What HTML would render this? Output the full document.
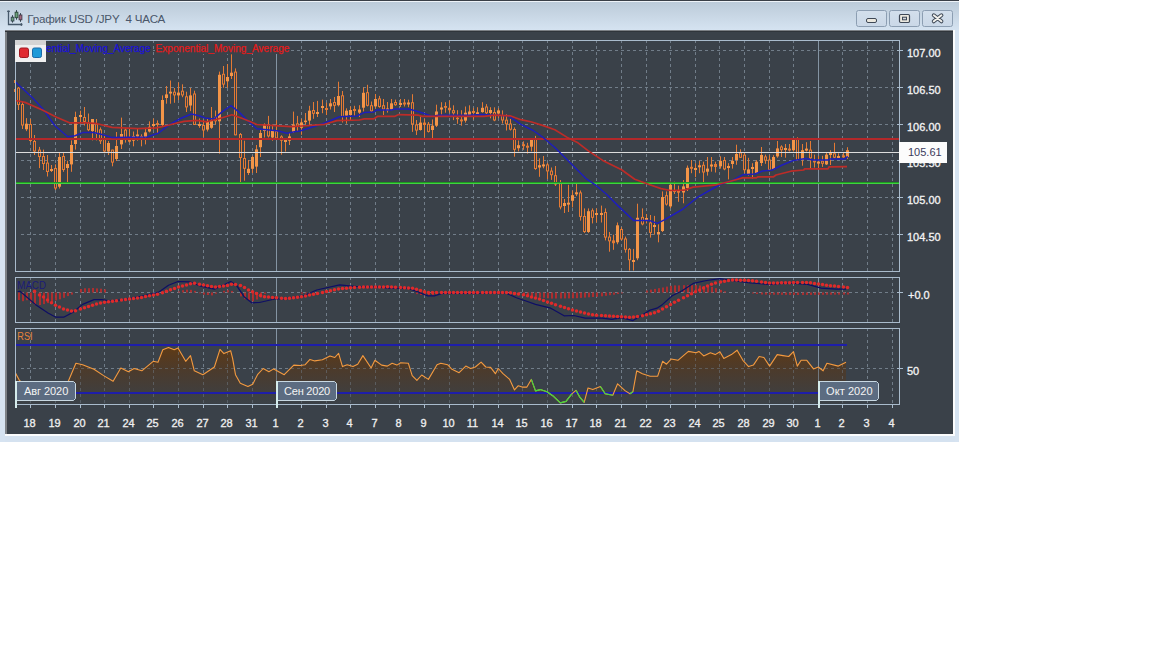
<!DOCTYPE html><html><head><meta charset="utf-8"><title>chart</title><style>html,body{margin:0;padding:0;width:1152px;height:648px;background:#fff;overflow:hidden}svg{position:absolute;left:0;top:0;display:block}text{font-family:"Liberation Sans",sans-serif}</style></head><body>
<svg width="1152" height="648" viewBox="0 0 1152 648">
<defs><linearGradient id="tb" x1="0" y1="0" x2="0" y2="1"><stop offset="0" stop-color="#bccbd9"/><stop offset="1" stop-color="#d5e3f1"/></linearGradient><linearGradient id="btn" x1="0" y1="0" x2="0" y2="1"><stop offset="0" stop-color="#d3dfec"/><stop offset="1" stop-color="#cad8e7"/></linearGradient><linearGradient id="rsif" gradientUnits="userSpaceOnUse" x1="0" y1="345" x2="0" y2="404"><stop offset="0" stop-color="#623c14"/><stop offset="0.2" stop-color="#563a1f"/><stop offset="0.45" stop-color="#4b3b2d"/><stop offset="0.75" stop-color="#423e3b"/><stop offset="0.85" stop-color="#3d4043"/><stop offset="1" stop-color="#3b4147"/></linearGradient><clipPath id="cpm"><rect x="14" y="41" width="885" height="230"/></clipPath><clipPath id="cpd"><rect x="16" y="278" width="883" height="44"/></clipPath><clipPath id="cpr"><rect x="16" y="329" width="883" height="75"/></clipPath></defs>
<rect x="0" y="0" width="959" height="442" fill="#d5e2f0"/>
<rect x="0" y="0" width="959" height="1" fill="#3a3f47"/>
<rect x="0" y="1" width="959" height="1" fill="#eef3f8"/>
<rect x="0" y="2" width="959" height="28" fill="url(#tb)"/>
<rect x="0" y="30" width="5" height="412" fill="#d6e3f1"/>
<rect x="955" y="30" width="4" height="412" fill="#d6e3f1"/>
<rect x="5" y="30" width="950" height="406" fill="#fbfcfd"/>
<rect x="5" y="30" width="948" height="404" fill="#7d8186"/>
<rect x="7" y="32" width="946" height="402" fill="#3a4149"/>
<rect x="5" y="31" width="948" height="1" fill="#30353b"/>
<g shape-rendering="geometricPrecision"><path d="M8.5 10.5 V24.5 H22.5" fill="none" stroke="#46586a" stroke-width="1.3"/><path d="M7 11.3 H10" stroke="#46586a" stroke-width="1.1"/><path d="M21.3 23 V26" stroke="#46586a" stroke-width="1.1"/><rect x="12" y="15.2" width="1" height="7.4" fill="#34444f"/><rect x="11.2" y="17.2" width="2.7" height="3.8" fill="#6aa27a" stroke="#34444f" stroke-width="0.9"/><rect x="16" y="10.1" width="1" height="9.6" fill="#34444f"/><rect x="15.1" y="12.2" width="2.8" height="5.5" fill="#6aa27a" stroke="#2f4a3a" stroke-width="0.9"/><rect x="20" y="13.1" width="1" height="8.7" fill="#34444f"/><rect x="19.1" y="15" width="2.8" height="4.8" fill="#a2667a" stroke="#443a4a" stroke-width="0.9"/></g>
<text x="27.3" y="22.6" font-size="11.6" fill="#4a576a" textLength="138" lengthAdjust="spacing">График USD /JPY  4 ЧАСА</text>
<rect x="856.5" y="10.5" width="30" height="16" rx="2" fill="url(#btn)" stroke="#8c9eb2"/>
<rect x="866.5" y="18.5" width="10" height="4" rx="1.5" fill="#ebe8df" stroke="#3e4856" stroke-width="1"/>
<rect x="889.5" y="10.5" width="30" height="16" rx="2" fill="url(#btn)" stroke="#8c9eb2"/>
<rect x="899.5" y="14.5" width="10" height="8" rx="1.2" fill="#ebe8df" stroke="#3e4856" stroke-width="1.2"/><rect x="902.5" y="17.2" width="4" height="2.6" fill="#d0d4da" stroke="#3e4856" stroke-width="1"/>
<rect x="922.5" y="10.5" width="30" height="16" rx="2" fill="url(#btn)" stroke="#8c9eb2"/>
<path d="M933.8 15.3 L941.4 21.3 M941.4 15.3 L933.8 21.3" stroke="#3e4856" stroke-width="4" stroke-linecap="round"/><path d="M933.8 15.3 L941.4 21.3 M941.4 15.3 L933.8 21.3" stroke="#f2f2ee" stroke-width="2" stroke-linecap="round"/>
<g shape-rendering="crispEdges"><line x1="30.5" y1="40" x2="30.5" y2="271" stroke="#717d89" stroke-width="1" stroke-dasharray="3 3"/><line x1="30.5" y1="277" x2="30.5" y2="322" stroke="#717d89" stroke-width="1" stroke-dasharray="3 3"/><line x1="30.5" y1="328" x2="30.5" y2="404" stroke="#717d89" stroke-width="1" stroke-dasharray="3 3"/><line x1="55.5" y1="40" x2="55.5" y2="271" stroke="#717d89" stroke-width="1" stroke-dasharray="3 3"/><line x1="55.5" y1="277" x2="55.5" y2="322" stroke="#717d89" stroke-width="1" stroke-dasharray="3 3"/><line x1="55.5" y1="328" x2="55.5" y2="404" stroke="#717d89" stroke-width="1" stroke-dasharray="3 3"/><line x1="80.5" y1="40" x2="80.5" y2="271" stroke="#717d89" stroke-width="1" stroke-dasharray="3 3"/><line x1="80.5" y1="277" x2="80.5" y2="322" stroke="#717d89" stroke-width="1" stroke-dasharray="3 3"/><line x1="80.5" y1="328" x2="80.5" y2="404" stroke="#717d89" stroke-width="1" stroke-dasharray="3 3"/><line x1="104.5" y1="40" x2="104.5" y2="271" stroke="#717d89" stroke-width="1" stroke-dasharray="3 3"/><line x1="104.5" y1="277" x2="104.5" y2="322" stroke="#717d89" stroke-width="1" stroke-dasharray="3 3"/><line x1="104.5" y1="328" x2="104.5" y2="404" stroke="#717d89" stroke-width="1" stroke-dasharray="3 3"/><line x1="129.5" y1="40" x2="129.5" y2="271" stroke="#717d89" stroke-width="1" stroke-dasharray="3 3"/><line x1="129.5" y1="277" x2="129.5" y2="322" stroke="#717d89" stroke-width="1" stroke-dasharray="3 3"/><line x1="129.5" y1="328" x2="129.5" y2="404" stroke="#717d89" stroke-width="1" stroke-dasharray="3 3"/><line x1="153.5" y1="40" x2="153.5" y2="271" stroke="#717d89" stroke-width="1" stroke-dasharray="3 3"/><line x1="153.5" y1="277" x2="153.5" y2="322" stroke="#717d89" stroke-width="1" stroke-dasharray="3 3"/><line x1="153.5" y1="328" x2="153.5" y2="404" stroke="#717d89" stroke-width="1" stroke-dasharray="3 3"/><line x1="178.5" y1="40" x2="178.5" y2="271" stroke="#717d89" stroke-width="1" stroke-dasharray="3 3"/><line x1="178.5" y1="277" x2="178.5" y2="322" stroke="#717d89" stroke-width="1" stroke-dasharray="3 3"/><line x1="178.5" y1="328" x2="178.5" y2="404" stroke="#717d89" stroke-width="1" stroke-dasharray="3 3"/><line x1="203.5" y1="40" x2="203.5" y2="271" stroke="#717d89" stroke-width="1" stroke-dasharray="3 3"/><line x1="203.5" y1="277" x2="203.5" y2="322" stroke="#717d89" stroke-width="1" stroke-dasharray="3 3"/><line x1="203.5" y1="328" x2="203.5" y2="404" stroke="#717d89" stroke-width="1" stroke-dasharray="3 3"/><line x1="227.5" y1="40" x2="227.5" y2="271" stroke="#717d89" stroke-width="1" stroke-dasharray="3 3"/><line x1="227.5" y1="277" x2="227.5" y2="322" stroke="#717d89" stroke-width="1" stroke-dasharray="3 3"/><line x1="227.5" y1="328" x2="227.5" y2="404" stroke="#717d89" stroke-width="1" stroke-dasharray="3 3"/><line x1="252.5" y1="40" x2="252.5" y2="271" stroke="#717d89" stroke-width="1" stroke-dasharray="3 3"/><line x1="252.5" y1="277" x2="252.5" y2="322" stroke="#717d89" stroke-width="1" stroke-dasharray="3 3"/><line x1="252.5" y1="328" x2="252.5" y2="404" stroke="#717d89" stroke-width="1" stroke-dasharray="3 3"/><line x1="276.5" y1="40" x2="276.5" y2="271" stroke="#8494a3" stroke-width="1"/><line x1="276.5" y1="277" x2="276.5" y2="322" stroke="#8494a3" stroke-width="1"/><line x1="276.5" y1="328" x2="276.5" y2="404" stroke="#8494a3" stroke-width="1"/><line x1="301.5" y1="40" x2="301.5" y2="271" stroke="#717d89" stroke-width="1" stroke-dasharray="3 3"/><line x1="301.5" y1="277" x2="301.5" y2="322" stroke="#717d89" stroke-width="1" stroke-dasharray="3 3"/><line x1="301.5" y1="328" x2="301.5" y2="404" stroke="#717d89" stroke-width="1" stroke-dasharray="3 3"/><line x1="326.5" y1="40" x2="326.5" y2="271" stroke="#717d89" stroke-width="1" stroke-dasharray="3 3"/><line x1="326.5" y1="277" x2="326.5" y2="322" stroke="#717d89" stroke-width="1" stroke-dasharray="3 3"/><line x1="326.5" y1="328" x2="326.5" y2="404" stroke="#717d89" stroke-width="1" stroke-dasharray="3 3"/><line x1="350.5" y1="40" x2="350.5" y2="271" stroke="#717d89" stroke-width="1" stroke-dasharray="3 3"/><line x1="350.5" y1="277" x2="350.5" y2="322" stroke="#717d89" stroke-width="1" stroke-dasharray="3 3"/><line x1="350.5" y1="328" x2="350.5" y2="404" stroke="#717d89" stroke-width="1" stroke-dasharray="3 3"/><line x1="375.5" y1="40" x2="375.5" y2="271" stroke="#717d89" stroke-width="1" stroke-dasharray="3 3"/><line x1="375.5" y1="277" x2="375.5" y2="322" stroke="#717d89" stroke-width="1" stroke-dasharray="3 3"/><line x1="375.5" y1="328" x2="375.5" y2="404" stroke="#717d89" stroke-width="1" stroke-dasharray="3 3"/><line x1="399.5" y1="40" x2="399.5" y2="271" stroke="#717d89" stroke-width="1" stroke-dasharray="3 3"/><line x1="399.5" y1="277" x2="399.5" y2="322" stroke="#717d89" stroke-width="1" stroke-dasharray="3 3"/><line x1="399.5" y1="328" x2="399.5" y2="404" stroke="#717d89" stroke-width="1" stroke-dasharray="3 3"/><line x1="424.5" y1="40" x2="424.5" y2="271" stroke="#717d89" stroke-width="1" stroke-dasharray="3 3"/><line x1="424.5" y1="277" x2="424.5" y2="322" stroke="#717d89" stroke-width="1" stroke-dasharray="3 3"/><line x1="424.5" y1="328" x2="424.5" y2="404" stroke="#717d89" stroke-width="1" stroke-dasharray="3 3"/><line x1="449.5" y1="40" x2="449.5" y2="271" stroke="#717d89" stroke-width="1" stroke-dasharray="3 3"/><line x1="449.5" y1="277" x2="449.5" y2="322" stroke="#717d89" stroke-width="1" stroke-dasharray="3 3"/><line x1="449.5" y1="328" x2="449.5" y2="404" stroke="#717d89" stroke-width="1" stroke-dasharray="3 3"/><line x1="473.5" y1="40" x2="473.5" y2="271" stroke="#717d89" stroke-width="1" stroke-dasharray="3 3"/><line x1="473.5" y1="277" x2="473.5" y2="322" stroke="#717d89" stroke-width="1" stroke-dasharray="3 3"/><line x1="473.5" y1="328" x2="473.5" y2="404" stroke="#717d89" stroke-width="1" stroke-dasharray="3 3"/><line x1="498.5" y1="40" x2="498.5" y2="271" stroke="#717d89" stroke-width="1" stroke-dasharray="3 3"/><line x1="498.5" y1="277" x2="498.5" y2="322" stroke="#717d89" stroke-width="1" stroke-dasharray="3 3"/><line x1="498.5" y1="328" x2="498.5" y2="404" stroke="#717d89" stroke-width="1" stroke-dasharray="3 3"/><line x1="522.5" y1="40" x2="522.5" y2="271" stroke="#717d89" stroke-width="1" stroke-dasharray="3 3"/><line x1="522.5" y1="277" x2="522.5" y2="322" stroke="#717d89" stroke-width="1" stroke-dasharray="3 3"/><line x1="522.5" y1="328" x2="522.5" y2="404" stroke="#717d89" stroke-width="1" stroke-dasharray="3 3"/><line x1="547.5" y1="40" x2="547.5" y2="271" stroke="#717d89" stroke-width="1" stroke-dasharray="3 3"/><line x1="547.5" y1="277" x2="547.5" y2="322" stroke="#717d89" stroke-width="1" stroke-dasharray="3 3"/><line x1="547.5" y1="328" x2="547.5" y2="404" stroke="#717d89" stroke-width="1" stroke-dasharray="3 3"/><line x1="572.5" y1="40" x2="572.5" y2="271" stroke="#717d89" stroke-width="1" stroke-dasharray="3 3"/><line x1="572.5" y1="277" x2="572.5" y2="322" stroke="#717d89" stroke-width="1" stroke-dasharray="3 3"/><line x1="572.5" y1="328" x2="572.5" y2="404" stroke="#717d89" stroke-width="1" stroke-dasharray="3 3"/><line x1="596.5" y1="40" x2="596.5" y2="271" stroke="#717d89" stroke-width="1" stroke-dasharray="3 3"/><line x1="596.5" y1="277" x2="596.5" y2="322" stroke="#717d89" stroke-width="1" stroke-dasharray="3 3"/><line x1="596.5" y1="328" x2="596.5" y2="404" stroke="#717d89" stroke-width="1" stroke-dasharray="3 3"/><line x1="621.5" y1="40" x2="621.5" y2="271" stroke="#717d89" stroke-width="1" stroke-dasharray="3 3"/><line x1="621.5" y1="277" x2="621.5" y2="322" stroke="#717d89" stroke-width="1" stroke-dasharray="3 3"/><line x1="621.5" y1="328" x2="621.5" y2="404" stroke="#717d89" stroke-width="1" stroke-dasharray="3 3"/><line x1="646.5" y1="40" x2="646.5" y2="271" stroke="#717d89" stroke-width="1" stroke-dasharray="3 3"/><line x1="646.5" y1="277" x2="646.5" y2="322" stroke="#717d89" stroke-width="1" stroke-dasharray="3 3"/><line x1="646.5" y1="328" x2="646.5" y2="404" stroke="#717d89" stroke-width="1" stroke-dasharray="3 3"/><line x1="670.5" y1="40" x2="670.5" y2="271" stroke="#717d89" stroke-width="1" stroke-dasharray="3 3"/><line x1="670.5" y1="277" x2="670.5" y2="322" stroke="#717d89" stroke-width="1" stroke-dasharray="3 3"/><line x1="670.5" y1="328" x2="670.5" y2="404" stroke="#717d89" stroke-width="1" stroke-dasharray="3 3"/><line x1="695.5" y1="40" x2="695.5" y2="271" stroke="#717d89" stroke-width="1" stroke-dasharray="3 3"/><line x1="695.5" y1="277" x2="695.5" y2="322" stroke="#717d89" stroke-width="1" stroke-dasharray="3 3"/><line x1="695.5" y1="328" x2="695.5" y2="404" stroke="#717d89" stroke-width="1" stroke-dasharray="3 3"/><line x1="719.5" y1="40" x2="719.5" y2="271" stroke="#717d89" stroke-width="1" stroke-dasharray="3 3"/><line x1="719.5" y1="277" x2="719.5" y2="322" stroke="#717d89" stroke-width="1" stroke-dasharray="3 3"/><line x1="719.5" y1="328" x2="719.5" y2="404" stroke="#717d89" stroke-width="1" stroke-dasharray="3 3"/><line x1="744.5" y1="40" x2="744.5" y2="271" stroke="#717d89" stroke-width="1" stroke-dasharray="3 3"/><line x1="744.5" y1="277" x2="744.5" y2="322" stroke="#717d89" stroke-width="1" stroke-dasharray="3 3"/><line x1="744.5" y1="328" x2="744.5" y2="404" stroke="#717d89" stroke-width="1" stroke-dasharray="3 3"/><line x1="769.5" y1="40" x2="769.5" y2="271" stroke="#717d89" stroke-width="1" stroke-dasharray="3 3"/><line x1="769.5" y1="277" x2="769.5" y2="322" stroke="#717d89" stroke-width="1" stroke-dasharray="3 3"/><line x1="769.5" y1="328" x2="769.5" y2="404" stroke="#717d89" stroke-width="1" stroke-dasharray="3 3"/><line x1="793.5" y1="40" x2="793.5" y2="271" stroke="#717d89" stroke-width="1" stroke-dasharray="3 3"/><line x1="793.5" y1="277" x2="793.5" y2="322" stroke="#717d89" stroke-width="1" stroke-dasharray="3 3"/><line x1="793.5" y1="328" x2="793.5" y2="404" stroke="#717d89" stroke-width="1" stroke-dasharray="3 3"/><line x1="818.5" y1="40" x2="818.5" y2="271" stroke="#8494a3" stroke-width="1"/><line x1="818.5" y1="277" x2="818.5" y2="322" stroke="#8494a3" stroke-width="1"/><line x1="818.5" y1="328" x2="818.5" y2="404" stroke="#8494a3" stroke-width="1"/><line x1="842.5" y1="40" x2="842.5" y2="271" stroke="#717d89" stroke-width="1" stroke-dasharray="3 3"/><line x1="842.5" y1="277" x2="842.5" y2="322" stroke="#717d89" stroke-width="1" stroke-dasharray="3 3"/><line x1="842.5" y1="328" x2="842.5" y2="404" stroke="#717d89" stroke-width="1" stroke-dasharray="3 3"/><line x1="867.5" y1="40" x2="867.5" y2="271" stroke="#717d89" stroke-width="1" stroke-dasharray="3 3"/><line x1="867.5" y1="277" x2="867.5" y2="322" stroke="#717d89" stroke-width="1" stroke-dasharray="3 3"/><line x1="867.5" y1="328" x2="867.5" y2="404" stroke="#717d89" stroke-width="1" stroke-dasharray="3 3"/><line x1="892.5" y1="40" x2="892.5" y2="271" stroke="#717d89" stroke-width="1" stroke-dasharray="3 3"/><line x1="892.5" y1="277" x2="892.5" y2="322" stroke="#717d89" stroke-width="1" stroke-dasharray="3 3"/><line x1="892.5" y1="328" x2="892.5" y2="404" stroke="#717d89" stroke-width="1" stroke-dasharray="3 3"/></g>
<g shape-rendering="crispEdges"><line x1="21" y1="50.5" x2="899" y2="50.5" stroke="#717d89" stroke-width="1" stroke-dasharray="3 3"/><line x1="21" y1="87.5" x2="899" y2="87.5" stroke="#717d89" stroke-width="1" stroke-dasharray="3 3"/><line x1="21" y1="124.5" x2="899" y2="124.5" stroke="#717d89" stroke-width="1" stroke-dasharray="3 3"/><line x1="21" y1="160.5" x2="899" y2="160.5" stroke="#717d89" stroke-width="1" stroke-dasharray="3 3"/><line x1="21" y1="197.5" x2="899" y2="197.5" stroke="#717d89" stroke-width="1" stroke-dasharray="3 3"/><line x1="21" y1="234.5" x2="899" y2="234.5" stroke="#717d89" stroke-width="1" stroke-dasharray="3 3"/><line x1="21" y1="292.5" x2="899" y2="292.5" stroke="#717d89" stroke-width="1" stroke-dasharray="3 3"/><line x1="21" y1="368.5" x2="899" y2="368.5" stroke="#717d89" stroke-width="1" stroke-dasharray="3 3"/></g>
<g clip-path="url(#cpr)"><polygon points="14.8,371.8 19.5,380.4 26.0,386.0 40.0,394.0 55.0,392.0 64.0,386.0 68.3,381.3 75.9,363.2 82.6,364.7 94.0,369.3 103.6,375.6 113.1,381.3 120.8,368.0 128.4,371.8 134.1,368.5 141.8,370.8 153.2,361.3 158.0,362.2 162.8,349.8 168.5,347.5 174.2,349.8 178.0,347.9 185.7,361.3 190.5,355.6 194.3,370.8 202.9,374.7 214.4,367.0 220.0,349.4 223.9,353.6 230.7,350.8 232.6,358.4 235.5,374.7 240.3,383.2 247.9,386.5 252.7,384.2 257.5,374.7 263.2,368.5 268.9,371.8 273.7,368.9 284.2,374.7 293.8,365.1 300.4,365.5 305.2,364.7 310.0,359.4 314.8,360.9 322.4,359.8 330.0,355.9 334.8,357.5 338.6,353.3 342.5,366.6 347.2,364.7 353.0,366.6 357.7,364.2 362.9,355.6 371.1,368.0 374.9,360.3 381.6,365.1 387.3,366.1 392.1,363.2 396.9,365.1 400.7,362.8 408.3,363.2 412.2,375.6 416.9,380.4 421.7,375.0 428.4,379.4 437.0,364.7 440.8,363.2 447.6,364.7 451.5,368.9 459.1,372.7 465.8,366.1 470.6,368.5 475.3,367.0 481.1,362.2 485.8,367.0 490.6,367.4 495.4,373.7 498.3,368.5 503.0,373.7 509.7,379.4 514.5,389.9 518.3,385.7 522.1,387.1 526.9,387.1 531.3,379.4 535.5,390.9 540.3,389.6 547.0,391.8 552.7,395.7 560.3,402.9 566.0,401.4 571.8,393.8 576.0,390.3 579.4,396.6 584.2,402.4 588.0,388.0 592.8,389.6 600.4,386.5 605.2,393.8 612.8,395.3 617.6,383.8 625.3,390.9 630.0,393.8 632.9,391.8 636.7,370.8 642.4,373.7 650.1,376.2 657.7,376.2 662.6,361.3 666.5,364.2 671.2,359.0 677.9,360.3 688.4,351.4 696.1,352.7 698.9,351.4 703.7,355.9 710.4,352.7 715.2,354.6 719.9,351.7 723.8,358.4 731.4,354.6 737.1,350.2 742.9,360.3 748.6,366.6 753.4,365.1 759.1,356.5 763.9,357.5 769.6,366.1 777.2,354.6 783.0,355.6 788.7,356.5 793.5,351.7 797.3,366.1 801.1,360.3 806.8,360.3 813.5,368.9 818.3,367.0 823.1,370.8 826.9,363.2 838.3,366.1 846.0,362.2 846.0,404.0 14.8,404.0" fill="url(#rsif)"/></g>
<g shape-rendering="crispEdges"><line x1="30.5" y1="328" x2="30.5" y2="404" stroke="#717d89" stroke-width="1" stroke-dasharray="3 3" opacity="0.5"/><line x1="55.5" y1="328" x2="55.5" y2="404" stroke="#717d89" stroke-width="1" stroke-dasharray="3 3" opacity="0.5"/><line x1="80.5" y1="328" x2="80.5" y2="404" stroke="#717d89" stroke-width="1" stroke-dasharray="3 3" opacity="0.5"/><line x1="104.5" y1="328" x2="104.5" y2="404" stroke="#717d89" stroke-width="1" stroke-dasharray="3 3" opacity="0.5"/><line x1="129.5" y1="328" x2="129.5" y2="404" stroke="#717d89" stroke-width="1" stroke-dasharray="3 3" opacity="0.5"/><line x1="153.5" y1="328" x2="153.5" y2="404" stroke="#717d89" stroke-width="1" stroke-dasharray="3 3" opacity="0.5"/><line x1="178.5" y1="328" x2="178.5" y2="404" stroke="#717d89" stroke-width="1" stroke-dasharray="3 3" opacity="0.5"/><line x1="203.5" y1="328" x2="203.5" y2="404" stroke="#717d89" stroke-width="1" stroke-dasharray="3 3" opacity="0.5"/><line x1="227.5" y1="328" x2="227.5" y2="404" stroke="#717d89" stroke-width="1" stroke-dasharray="3 3" opacity="0.5"/><line x1="252.5" y1="328" x2="252.5" y2="404" stroke="#717d89" stroke-width="1" stroke-dasharray="3 3" opacity="0.5"/><line x1="276.5" y1="328" x2="276.5" y2="404" stroke="#8494a3" stroke-width="1" opacity="0.7"/><line x1="301.5" y1="328" x2="301.5" y2="404" stroke="#717d89" stroke-width="1" stroke-dasharray="3 3" opacity="0.5"/><line x1="326.5" y1="328" x2="326.5" y2="404" stroke="#717d89" stroke-width="1" stroke-dasharray="3 3" opacity="0.5"/><line x1="350.5" y1="328" x2="350.5" y2="404" stroke="#717d89" stroke-width="1" stroke-dasharray="3 3" opacity="0.5"/><line x1="375.5" y1="328" x2="375.5" y2="404" stroke="#717d89" stroke-width="1" stroke-dasharray="3 3" opacity="0.5"/><line x1="399.5" y1="328" x2="399.5" y2="404" stroke="#717d89" stroke-width="1" stroke-dasharray="3 3" opacity="0.5"/><line x1="424.5" y1="328" x2="424.5" y2="404" stroke="#717d89" stroke-width="1" stroke-dasharray="3 3" opacity="0.5"/><line x1="449.5" y1="328" x2="449.5" y2="404" stroke="#717d89" stroke-width="1" stroke-dasharray="3 3" opacity="0.5"/><line x1="473.5" y1="328" x2="473.5" y2="404" stroke="#717d89" stroke-width="1" stroke-dasharray="3 3" opacity="0.5"/><line x1="498.5" y1="328" x2="498.5" y2="404" stroke="#717d89" stroke-width="1" stroke-dasharray="3 3" opacity="0.5"/><line x1="522.5" y1="328" x2="522.5" y2="404" stroke="#717d89" stroke-width="1" stroke-dasharray="3 3" opacity="0.5"/><line x1="547.5" y1="328" x2="547.5" y2="404" stroke="#717d89" stroke-width="1" stroke-dasharray="3 3" opacity="0.5"/><line x1="572.5" y1="328" x2="572.5" y2="404" stroke="#717d89" stroke-width="1" stroke-dasharray="3 3" opacity="0.5"/><line x1="596.5" y1="328" x2="596.5" y2="404" stroke="#717d89" stroke-width="1" stroke-dasharray="3 3" opacity="0.5"/><line x1="621.5" y1="328" x2="621.5" y2="404" stroke="#717d89" stroke-width="1" stroke-dasharray="3 3" opacity="0.5"/><line x1="646.5" y1="328" x2="646.5" y2="404" stroke="#717d89" stroke-width="1" stroke-dasharray="3 3" opacity="0.5"/><line x1="670.5" y1="328" x2="670.5" y2="404" stroke="#717d89" stroke-width="1" stroke-dasharray="3 3" opacity="0.5"/><line x1="695.5" y1="328" x2="695.5" y2="404" stroke="#717d89" stroke-width="1" stroke-dasharray="3 3" opacity="0.5"/><line x1="719.5" y1="328" x2="719.5" y2="404" stroke="#717d89" stroke-width="1" stroke-dasharray="3 3" opacity="0.5"/><line x1="744.5" y1="328" x2="744.5" y2="404" stroke="#717d89" stroke-width="1" stroke-dasharray="3 3" opacity="0.5"/><line x1="769.5" y1="328" x2="769.5" y2="404" stroke="#717d89" stroke-width="1" stroke-dasharray="3 3" opacity="0.5"/><line x1="793.5" y1="328" x2="793.5" y2="404" stroke="#717d89" stroke-width="1" stroke-dasharray="3 3" opacity="0.5"/><line x1="818.5" y1="328" x2="818.5" y2="404" stroke="#8494a3" stroke-width="1" opacity="0.7"/><line x1="842.5" y1="328" x2="842.5" y2="404" stroke="#717d89" stroke-width="1" stroke-dasharray="3 3" opacity="0.5"/><line x1="867.5" y1="328" x2="867.5" y2="404" stroke="#717d89" stroke-width="1" stroke-dasharray="3 3" opacity="0.5"/><line x1="892.5" y1="328" x2="892.5" y2="404" stroke="#717d89" stroke-width="1" stroke-dasharray="3 3" opacity="0.5"/><line x1="21" y1="368.5" x2="899" y2="368.5" stroke="#717d89" stroke-width="1" stroke-dasharray="3 3" opacity="0.5"/></g>
<rect x="16" y="344" width="831" height="2" fill="#1e1eaa"/>
<rect x="16" y="392" width="831" height="2" fill="#1e1eaa"/>
<g clip-path="url(#cpr)"><polyline points="14.8,371.8 19.5,380.4 26.0,386.0 40.0,394.0 55.0,392.0 64.0,386.0 68.3,381.3 75.9,363.2 82.6,364.7 94.0,369.3 103.6,375.6 113.1,381.3 120.8,368.0 128.4,371.8 134.1,368.5 141.8,370.8 153.2,361.3 158.0,362.2 162.8,349.8 168.5,347.5 174.2,349.8 178.0,347.9 185.7,361.3 190.5,355.6 194.3,370.8 202.9,374.7 214.4,367.0 220.0,349.4 223.9,353.6 230.7,350.8 232.6,358.4 235.5,374.7 240.3,383.2 247.9,386.5 252.7,384.2 257.5,374.7 263.2,368.5 268.9,371.8 273.7,368.9 284.2,374.7 293.8,365.1 300.4,365.5 305.2,364.7 310.0,359.4 314.8,360.9 322.4,359.8 330.0,355.9 334.8,357.5 338.6,353.3 342.5,366.6 347.2,364.7 353.0,366.6 357.7,364.2 362.9,355.6 371.1,368.0 374.9,360.3 381.6,365.1 387.3,366.1 392.1,363.2 396.9,365.1 400.7,362.8 408.3,363.2 412.2,375.6 416.9,380.4 421.7,375.0 428.4,379.4 437.0,364.7 440.8,363.2 447.6,364.7 451.5,368.9 459.1,372.7 465.8,366.1 470.6,368.5 475.3,367.0 481.1,362.2 485.8,367.0 490.6,367.4 495.4,373.7 498.3,368.5 503.0,373.7 509.7,379.4 514.5,389.9 518.3,385.7 522.1,387.1 526.9,387.1 531.3,379.4 535.5,390.9 540.3,389.6 547.0,391.8 552.7,395.7 560.3,402.9 566.0,401.4 571.8,393.8 576.0,390.3 579.4,396.6 584.2,402.4 588.0,388.0 592.8,389.6 600.4,386.5 605.2,393.8 612.8,395.3 617.6,383.8 625.3,390.9 630.0,393.8 632.9,391.8 636.7,370.8 642.4,373.7 650.1,376.2 657.7,376.2 662.6,361.3 666.5,364.2 671.2,359.0 677.9,360.3 688.4,351.4 696.1,352.7 698.9,351.4 703.7,355.9 710.4,352.7 715.2,354.6 719.9,351.7 723.8,358.4 731.4,354.6 737.1,350.2 742.9,360.3 748.6,366.6 753.4,365.1 759.1,356.5 763.9,357.5 769.6,366.1 777.2,354.6 783.0,355.6 788.7,356.5 793.5,351.7 797.3,366.1 801.1,360.3 806.8,360.3 813.5,368.9 818.3,367.0 823.1,370.8 826.9,363.2 838.3,366.1 846.0,362.2" fill="none" stroke="#f39a40" stroke-width="1.1" stroke-linejoin="round"/>
<polyline points="531.3,379.4 535.5,390.9 540.3,389.6 547.0,391.8 552.7,395.7 560.3,402.9 566.0,401.4 571.8,393.8" fill="none" stroke="#3ddc3d" stroke-width="1.1" stroke-linejoin="round"/>
<polyline points="576.0,390.3 579.4,396.6 584.2,402.4" fill="none" stroke="#3ddc3d" stroke-width="1.1" stroke-linejoin="round"/>
<polyline points="600.4,386.5 605.2,393.8 612.8,395.3" fill="none" stroke="#3ddc3d" stroke-width="1.1" stroke-linejoin="round"/>
<polyline points="630.0,393.8 632.9,391.8" fill="none" stroke="#3ddc3d" stroke-width="1.1" stroke-linejoin="round"/>
</g>
<text x="17.3" y="340" font-size="11" fill="#e8843a" textLength="15.2" lengthAdjust="spacingAndGlyphs">RSI</text>
<g clip-path="url(#cpm)"><rect x="14" y="80.0" width="1" height="12.0" fill="#e47a34"/><rect x="13" y="82.0" width="3" height="8.0" fill="#e47a34"/><rect x="14" y="83.0" width="1" height="6.0" fill="#3a4149"/><rect x="18" y="87.0" width="1" height="23.0" fill="#e47a34"/><rect x="17" y="87.6" width="3" height="17.4" fill="#e47a34"/><rect x="18" y="88.6" width="1" height="15.4" fill="#3a4149"/><rect x="22" y="102.0" width="1" height="27.0" fill="#e47a34"/><rect x="21" y="104.0" width="3" height="21.5" fill="#e47a34"/><rect x="22" y="105.0" width="1" height="19.5" fill="#3a4149"/><rect x="26" y="118.1" width="1" height="13.0" fill="#e47a34"/><rect x="25" y="123.7" width="3" height="5.6" fill="#f39548"/><rect x="30" y="119.0" width="1" height="23.0" fill="#e47a34"/><rect x="29" y="124.0" width="3" height="17.0" fill="#e47a34"/><rect x="30" y="125.0" width="1" height="15.0" fill="#3a4149"/><rect x="34" y="135.0" width="1" height="20.0" fill="#e47a34"/><rect x="33" y="141.0" width="3" height="10.5" fill="#e47a34"/><rect x="34" y="142.0" width="1" height="8.5" fill="#3a4149"/><rect x="39" y="146.9" width="1" height="21.2" fill="#e47a34"/><rect x="38" y="149.6" width="3" height="7.4" fill="#e47a34"/><rect x="39" y="150.6" width="1" height="5.4" fill="#3a4149"/><rect x="43" y="149.6" width="1" height="20.4" fill="#e47a34"/><rect x="42" y="156.0" width="3" height="8.0" fill="#e47a34"/><rect x="43" y="157.0" width="1" height="6.0" fill="#3a4149"/><rect x="47" y="155.0" width="1" height="21.5" fill="#e47a34"/><rect x="46" y="162.6" width="3" height="9.4" fill="#e47a34"/><rect x="47" y="163.6" width="1" height="7.4" fill="#3a4149"/><rect x="51" y="165.0" width="1" height="7.0" fill="#e47a34"/><rect x="50" y="169.0" width="3" height="2.0" fill="#f39548"/><rect x="55" y="164.4" width="1" height="25.6" fill="#e47a34"/><rect x="54" y="168.0" width="3" height="20.5" fill="#e47a34"/><rect x="55" y="169.0" width="1" height="18.5" fill="#3a4149"/><rect x="59" y="153.0" width="1" height="35.5" fill="#e47a34"/><rect x="58" y="157.0" width="3" height="29.7" fill="#f39548"/><rect x="63" y="152.4" width="1" height="19.4" fill="#e47a34"/><rect x="62" y="156.0" width="3" height="14.0" fill="#e47a34"/><rect x="63" y="157.0" width="1" height="12.0" fill="#3a4149"/><rect x="67" y="160.7" width="1" height="23.2" fill="#e47a34"/><rect x="66" y="164.0" width="3" height="4.0" fill="#f39548"/><rect x="71" y="140.4" width="1" height="31.4" fill="#e47a34"/><rect x="70" y="145.0" width="3" height="19.4" fill="#f39548"/><rect x="75" y="111.7" width="1" height="37.9" fill="#e47a34"/><rect x="74" y="117.0" width="3" height="27.0" fill="#f39548"/><rect x="80" y="110.7" width="1" height="13.0" fill="#e47a34"/><rect x="79" y="115.0" width="3" height="2.0" fill="#f39548"/><rect x="84" y="107.0" width="1" height="18.5" fill="#e47a34"/><rect x="83" y="117.0" width="3" height="4.9" fill="#e47a34"/><rect x="84" y="118.0" width="1" height="2.9" fill="#3a4149"/><rect x="88" y="113.5" width="1" height="17.6" fill="#e47a34"/><rect x="87" y="122.8" width="3" height="7.4" fill="#e47a34"/><rect x="88" y="123.8" width="1" height="5.4" fill="#3a4149"/><rect x="92" y="119.0" width="1" height="21.4" fill="#e47a34"/><rect x="91" y="119.0" width="3" height="12.1" fill="#f39548"/><rect x="96" y="119.0" width="1" height="21.4" fill="#e47a34"/><rect x="95" y="123.7" width="3" height="10.2" fill="#e47a34"/><rect x="96" y="124.7" width="1" height="8.2" fill="#3a4149"/><rect x="100" y="127.4" width="1" height="16.6" fill="#e47a34"/><rect x="99" y="129.3" width="3" height="12.0" fill="#e47a34"/><rect x="100" y="130.3" width="1" height="10.0" fill="#3a4149"/><rect x="104" y="134.8" width="1" height="18.5" fill="#e47a34"/><rect x="103" y="138.5" width="3" height="13.0" fill="#e47a34"/><rect x="104" y="139.5" width="1" height="11.0" fill="#3a4149"/><rect x="108" y="141.0" width="1" height="14.0" fill="#e47a34"/><rect x="107" y="143.0" width="3" height="8.5" fill="#f39548"/><rect x="112" y="149.6" width="1" height="16.7" fill="#e47a34"/><rect x="111" y="149.6" width="3" height="13.0" fill="#e47a34"/><rect x="112" y="150.6" width="1" height="11.0" fill="#3a4149"/><rect x="116" y="132.0" width="1" height="29.0" fill="#e47a34"/><rect x="115" y="146.0" width="3" height="13.0" fill="#f39548"/><rect x="121" y="117.6" width="1" height="31.4" fill="#e47a34"/><rect x="120" y="134.0" width="3" height="10.4" fill="#f39548"/><rect x="125" y="127.8" width="1" height="14.8" fill="#e47a34"/><rect x="124" y="129.6" width="3" height="8.4" fill="#e47a34"/><rect x="125" y="130.6" width="1" height="6.4" fill="#3a4149"/><rect x="129" y="127.8" width="1" height="14.8" fill="#e47a34"/><rect x="128" y="139.0" width="3" height="2.7" fill="#e47a34"/><rect x="133" y="131.5" width="1" height="14.8" fill="#e47a34"/><rect x="132" y="136.0" width="3" height="4.7" fill="#f39548"/><rect x="137" y="128.7" width="1" height="12.0" fill="#e47a34"/><rect x="136" y="134.5" width="3" height="2.0" fill="#f39548"/><rect x="141" y="134.3" width="1" height="12.0" fill="#e47a34"/><rect x="140" y="136.0" width="3" height="3.0" fill="#e47a34"/><rect x="145" y="127.8" width="1" height="16.6" fill="#e47a34"/><rect x="144" y="132.4" width="3" height="4.6" fill="#f39548"/><rect x="149" y="121.3" width="1" height="11.1" fill="#e47a34"/><rect x="148" y="126.8" width="3" height="4.7" fill="#f39548"/><rect x="153" y="118.5" width="1" height="11.1" fill="#e47a34"/><rect x="152" y="124.0" width="3" height="2.0" fill="#f39548"/><rect x="157" y="120.4" width="1" height="12.9" fill="#e47a34"/><rect x="156" y="123.1" width="3" height="1.9" fill="#e47a34"/><rect x="162" y="95.4" width="1" height="31.4" fill="#e47a34"/><rect x="161" y="100.0" width="3" height="25.0" fill="#f39548"/><rect x="166" y="86.0" width="1" height="17.7" fill="#e47a34"/><rect x="165" y="94.4" width="3" height="3.6" fill="#f39548"/><rect x="170" y="80.5" width="1" height="23.2" fill="#e47a34"/><rect x="169" y="91.7" width="3" height="1.8" fill="#f39548"/><rect x="174" y="88.0" width="1" height="14.8" fill="#e47a34"/><rect x="173" y="91.7" width="3" height="3.7" fill="#e47a34"/><rect x="174" y="92.7" width="1" height="1.7" fill="#3a4149"/><rect x="178" y="82.4" width="1" height="17.6" fill="#e47a34"/><rect x="177" y="92.6" width="3" height="2.8" fill="#f39548"/><rect x="182" y="84.3" width="1" height="12.9" fill="#e47a34"/><rect x="181" y="90.7" width="3" height="4.7" fill="#e47a34"/><rect x="182" y="91.7" width="1" height="2.7" fill="#3a4149"/><rect x="186" y="91.7" width="1" height="20.3" fill="#e47a34"/><rect x="185" y="96.3" width="3" height="11.1" fill="#e47a34"/><rect x="186" y="97.3" width="1" height="9.1" fill="#3a4149"/><rect x="190" y="88.0" width="1" height="23.1" fill="#e47a34"/><rect x="189" y="95.4" width="3" height="10.1" fill="#f39548"/><rect x="194" y="90.7" width="1" height="34.3" fill="#e47a34"/><rect x="193" y="93.5" width="3" height="31.5" fill="#e47a34"/><rect x="194" y="94.5" width="1" height="29.5" fill="#3a4149"/><rect x="199" y="118.5" width="1" height="9.3" fill="#e47a34"/><rect x="198" y="124.0" width="3" height="2.0" fill="#f39548"/><rect x="203" y="120.0" width="1" height="17.0" fill="#e47a34"/><rect x="202" y="125.0" width="3" height="5.5" fill="#e47a34"/><rect x="203" y="126.0" width="1" height="3.5" fill="#3a4149"/><rect x="207" y="118.5" width="1" height="13.0" fill="#e47a34"/><rect x="206" y="122.0" width="3" height="7.6" fill="#f39548"/><rect x="211" y="107.0" width="1" height="21.8" fill="#e47a34"/><rect x="210" y="120.0" width="3" height="7.8" fill="#f39548"/><rect x="215" y="110.5" width="1" height="14.0" fill="#e47a34"/><rect x="214" y="117.0" width="3" height="4.3" fill="#e47a34"/><rect x="215" y="118.0" width="1" height="2.3" fill="#3a4149"/><rect x="219" y="71.6" width="1" height="82.1" fill="#e47a34"/><rect x="218" y="74.8" width="3" height="46.5" fill="#f39548"/><rect x="223" y="66.0" width="1" height="21.8" fill="#e47a34"/><rect x="222" y="73.8" width="3" height="10.8" fill="#e47a34"/><rect x="223" y="74.8" width="1" height="8.8" fill="#3a4149"/><rect x="227" y="64.0" width="1" height="23.8" fill="#e47a34"/><rect x="226" y="77.0" width="3" height="4.3" fill="#f39548"/><rect x="231" y="54.3" width="1" height="24.7" fill="#e47a34"/><rect x="230" y="72.7" width="3" height="3.3" fill="#f39548"/><rect x="235" y="68.4" width="1" height="66.9" fill="#e47a34"/><rect x="234" y="71.6" width="3" height="63.7" fill="#e47a34"/><rect x="235" y="72.6" width="1" height="61.7" fill="#3a4149"/><rect x="240" y="133.0" width="1" height="49.8" fill="#e47a34"/><rect x="239" y="134.0" width="3" height="24.0" fill="#e47a34"/><rect x="240" y="135.0" width="1" height="22.0" fill="#3a4149"/><rect x="244" y="140.7" width="1" height="40.0" fill="#e47a34"/><rect x="243" y="158.0" width="3" height="10.8" fill="#e47a34"/><rect x="244" y="159.0" width="1" height="8.8" fill="#3a4149"/><rect x="248" y="160.0" width="1" height="15.0" fill="#e47a34"/><rect x="247" y="168.8" width="3" height="4.2" fill="#f39548"/><rect x="252" y="155.8" width="1" height="17.2" fill="#e47a34"/><rect x="251" y="157.0" width="3" height="11.8" fill="#f39548"/><rect x="256" y="145.0" width="1" height="28.0" fill="#e47a34"/><rect x="255" y="149.4" width="3" height="17.2" fill="#f39548"/><rect x="260" y="130.0" width="1" height="27.0" fill="#e47a34"/><rect x="259" y="133.0" width="3" height="14.2" fill="#f39548"/><rect x="264" y="123.4" width="1" height="14.1" fill="#e47a34"/><rect x="263" y="124.5" width="3" height="6.5" fill="#f39548"/><rect x="268" y="115.9" width="1" height="21.6" fill="#e47a34"/><rect x="267" y="124.5" width="3" height="11.9" fill="#e47a34"/><rect x="268" y="125.5" width="1" height="9.9" fill="#3a4149"/><rect x="272" y="124.5" width="1" height="16.2" fill="#e47a34"/><rect x="271" y="131.0" width="3" height="6.5" fill="#f39548"/><rect x="276" y="120.2" width="1" height="18.3" fill="#e47a34"/><rect x="275" y="131.0" width="3" height="7.5" fill="#e47a34"/><rect x="276" y="132.0" width="1" height="5.5" fill="#3a4149"/><rect x="281" y="135.3" width="1" height="19.4" fill="#e47a34"/><rect x="280" y="136.4" width="3" height="4.3" fill="#e47a34"/><rect x="281" y="137.4" width="1" height="2.3" fill="#3a4149"/><rect x="285" y="138.5" width="1" height="13.0" fill="#e47a34"/><rect x="284" y="140.0" width="3" height="2.0" fill="#f39548"/><rect x="289" y="132.0" width="1" height="13.0" fill="#e47a34"/><rect x="288" y="136.4" width="3" height="4.3" fill="#f39548"/><rect x="293" y="111.6" width="1" height="21.4" fill="#e47a34"/><rect x="292" y="124.5" width="3" height="7.5" fill="#f39548"/><rect x="297" y="115.9" width="1" height="16.1" fill="#e47a34"/><rect x="296" y="123.4" width="3" height="3.3" fill="#e47a34"/><rect x="297" y="124.4" width="1" height="1.3" fill="#3a4149"/><rect x="301" y="118.8" width="1" height="16.0" fill="#e47a34"/><rect x="300" y="122.4" width="3" height="5.4" fill="#f39548"/><rect x="305" y="113.0" width="1" height="11.3" fill="#e47a34"/><rect x="304" y="120.6" width="3" height="1.5" fill="#f39548"/><rect x="309" y="105.8" width="1" height="19.8" fill="#e47a34"/><rect x="308" y="110.7" width="3" height="9.9" fill="#f39548"/><rect x="313" y="102.0" width="1" height="16.8" fill="#e47a34"/><rect x="312" y="110.0" width="3" height="3.8" fill="#e47a34"/><rect x="313" y="111.0" width="1" height="1.8" fill="#3a4149"/><rect x="317" y="100.9" width="1" height="16.1" fill="#e47a34"/><rect x="316" y="112.0" width="3" height="2.0" fill="#f39548"/><rect x="322" y="99.6" width="1" height="13.6" fill="#e47a34"/><rect x="321" y="106.0" width="3" height="2.0" fill="#f39548"/><rect x="326" y="102.7" width="1" height="12.3" fill="#e47a34"/><rect x="325" y="108.0" width="3" height="2.0" fill="#e47a34"/><rect x="330" y="99.0" width="1" height="10.5" fill="#e47a34"/><rect x="329" y="103.3" width="3" height="3.1" fill="#f39548"/><rect x="334" y="97.0" width="1" height="15.0" fill="#e47a34"/><rect x="333" y="102.0" width="3" height="3.8" fill="#e47a34"/><rect x="334" y="103.0" width="1" height="1.8" fill="#3a4149"/><rect x="338" y="81.7" width="1" height="24.7" fill="#e47a34"/><rect x="337" y="96.0" width="3" height="9.2" fill="#f39548"/><rect x="342" y="91.0" width="1" height="31.5" fill="#e47a34"/><rect x="341" y="95.3" width="3" height="21.6" fill="#e47a34"/><rect x="342" y="96.3" width="1" height="19.6" fill="#3a4149"/><rect x="346" y="108.3" width="1" height="15.4" fill="#e47a34"/><rect x="345" y="110.7" width="3" height="5.0" fill="#f39548"/><rect x="350" y="106.4" width="1" height="14.2" fill="#e47a34"/><rect x="349" y="110.0" width="3" height="5.0" fill="#f39548"/><rect x="354" y="105.8" width="1" height="9.9" fill="#e47a34"/><rect x="353" y="109.0" width="3" height="2.0" fill="#e47a34"/><rect x="359" y="105.2" width="1" height="11.8" fill="#e47a34"/><rect x="358" y="109.5" width="3" height="3.1" fill="#f39548"/><rect x="363" y="87.3" width="1" height="24.1" fill="#e47a34"/><rect x="362" y="92.8" width="3" height="14.9" fill="#f39548"/><rect x="367" y="84.8" width="1" height="21.6" fill="#e47a34"/><rect x="366" y="92.2" width="3" height="13.6" fill="#e47a34"/><rect x="367" y="93.2" width="1" height="11.6" fill="#3a4149"/><rect x="371" y="101.5" width="1" height="10.5" fill="#e47a34"/><rect x="370" y="105.2" width="3" height="6.2" fill="#e47a34"/><rect x="371" y="106.2" width="1" height="4.2" fill="#3a4149"/><rect x="375" y="94.0" width="1" height="14.3" fill="#e47a34"/><rect x="374" y="99.0" width="3" height="7.4" fill="#f39548"/><rect x="379" y="95.9" width="1" height="11.8" fill="#e47a34"/><rect x="378" y="98.4" width="3" height="8.6" fill="#e47a34"/><rect x="379" y="99.4" width="1" height="6.6" fill="#3a4149"/><rect x="383" y="99.0" width="1" height="16.0" fill="#e47a34"/><rect x="382" y="105.2" width="3" height="4.3" fill="#e47a34"/><rect x="383" y="106.2" width="1" height="2.3" fill="#3a4149"/><rect x="387" y="102.0" width="1" height="10.6" fill="#e47a34"/><rect x="386" y="108.5" width="3" height="2.0" fill="#f39548"/><rect x="391" y="99.0" width="1" height="11.1" fill="#e47a34"/><rect x="390" y="103.3" width="3" height="6.2" fill="#f39548"/><rect x="395" y="99.6" width="1" height="6.2" fill="#e47a34"/><rect x="394" y="102.0" width="3" height="3.2" fill="#e47a34"/><rect x="395" y="103.0" width="1" height="1.2" fill="#3a4149"/><rect x="400" y="99.0" width="1" height="8.0" fill="#e47a34"/><rect x="399" y="103.0" width="3" height="2.0" fill="#f39548"/><rect x="404" y="99.0" width="1" height="7.5" fill="#e47a34"/><rect x="403" y="102.5" width="3" height="2.0" fill="#e47a34"/><rect x="408" y="99.7" width="1" height="7.5" fill="#e47a34"/><rect x="407" y="102.5" width="3" height="2.0" fill="#f39548"/><rect x="412" y="94.2" width="1" height="37.7" fill="#e47a34"/><rect x="411" y="102.2" width="3" height="22.2" fill="#e47a34"/><rect x="412" y="103.2" width="1" height="20.2" fill="#3a4149"/><rect x="416" y="120.0" width="1" height="15.0" fill="#e47a34"/><rect x="415" y="124.4" width="3" height="6.2" fill="#e47a34"/><rect x="416" y="125.4" width="1" height="4.2" fill="#3a4149"/><rect x="420" y="116.4" width="1" height="14.2" fill="#e47a34"/><rect x="419" y="122.6" width="3" height="7.4" fill="#f39548"/><rect x="424" y="118.9" width="1" height="18.5" fill="#e47a34"/><rect x="423" y="122.6" width="3" height="2.4" fill="#e47a34"/><rect x="428" y="122.0" width="1" height="10.5" fill="#e47a34"/><rect x="427" y="123.8" width="3" height="8.1" fill="#e47a34"/><rect x="428" y="124.8" width="1" height="6.1" fill="#3a4149"/><rect x="432" y="119.5" width="1" height="19.8" fill="#e47a34"/><rect x="431" y="125.7" width="3" height="4.3" fill="#f39548"/><rect x="436" y="104.7" width="1" height="22.3" fill="#e47a34"/><rect x="435" y="111.5" width="3" height="14.2" fill="#f39548"/><rect x="441" y="102.2" width="1" height="12.4" fill="#e47a34"/><rect x="440" y="107.5" width="3" height="2.0" fill="#f39548"/><rect x="445" y="102.2" width="1" height="10.5" fill="#e47a34"/><rect x="444" y="106.0" width="3" height="1.8" fill="#e47a34"/><rect x="449" y="100.4" width="1" height="12.3" fill="#e47a34"/><rect x="448" y="107.8" width="3" height="2.4" fill="#e47a34"/><rect x="453" y="105.3" width="1" height="14.8" fill="#e47a34"/><rect x="452" y="110.2" width="3" height="3.1" fill="#e47a34"/><rect x="453" y="111.2" width="1" height="1.1" fill="#3a4149"/><rect x="457" y="110.2" width="1" height="13.6" fill="#e47a34"/><rect x="456" y="117.7" width="3" height="1.5" fill="#e47a34"/><rect x="461" y="110.2" width="1" height="15.5" fill="#e47a34"/><rect x="460" y="119.5" width="3" height="1.9" fill="#e47a34"/><rect x="465" y="106.5" width="1" height="16.1" fill="#e47a34"/><rect x="464" y="112.7" width="3" height="8.0" fill="#f39548"/><rect x="469" y="105.3" width="1" height="11.1" fill="#e47a34"/><rect x="468" y="111.5" width="3" height="3.7" fill="#f39548"/><rect x="473" y="107.8" width="1" height="11.7" fill="#e47a34"/><rect x="472" y="111.0" width="3" height="2.0" fill="#e47a34"/><rect x="477" y="107.2" width="1" height="7.4" fill="#e47a34"/><rect x="476" y="112.3" width="3" height="2.0" fill="#f39548"/><rect x="482" y="102.2" width="1" height="10.5" fill="#e47a34"/><rect x="481" y="107.8" width="3" height="4.3" fill="#f39548"/><rect x="486" y="104.1" width="1" height="9.9" fill="#e47a34"/><rect x="485" y="106.5" width="3" height="6.8" fill="#e47a34"/><rect x="486" y="107.5" width="1" height="4.8" fill="#3a4149"/><rect x="490" y="107.2" width="1" height="11.1" fill="#e47a34"/><rect x="489" y="110.0" width="3" height="3.0" fill="#f39548"/><rect x="494" y="107.3" width="1" height="13.9" fill="#e47a34"/><rect x="493" y="112.0" width="3" height="8.5" fill="#e47a34"/><rect x="494" y="113.0" width="1" height="6.5" fill="#3a4149"/><rect x="498" y="108.1" width="1" height="10.0" fill="#e47a34"/><rect x="497" y="110.4" width="3" height="3.1" fill="#f39548"/><rect x="502" y="110.4" width="1" height="13.1" fill="#e47a34"/><rect x="501" y="115.0" width="3" height="5.5" fill="#e47a34"/><rect x="502" y="116.0" width="1" height="3.5" fill="#3a4149"/><rect x="506" y="114.3" width="1" height="16.2" fill="#e47a34"/><rect x="505" y="119.7" width="3" height="4.6" fill="#e47a34"/><rect x="506" y="120.7" width="1" height="2.6" fill="#3a4149"/><rect x="510" y="118.9" width="1" height="11.6" fill="#e47a34"/><rect x="509" y="123.5" width="3" height="6.2" fill="#e47a34"/><rect x="510" y="124.5" width="1" height="4.2" fill="#3a4149"/><rect x="514" y="127.4" width="1" height="29.3" fill="#e47a34"/><rect x="513" y="129.0" width="3" height="20.8" fill="#e47a34"/><rect x="514" y="130.0" width="1" height="18.8" fill="#3a4149"/><rect x="518" y="140.5" width="1" height="10.8" fill="#e47a34"/><rect x="517" y="145.2" width="3" height="3.0" fill="#f39548"/><rect x="523" y="141.3" width="1" height="8.5" fill="#e47a34"/><rect x="522" y="144.2" width="3" height="2.0" fill="#e47a34"/><rect x="527" y="142.8" width="1" height="10.8" fill="#e47a34"/><rect x="526" y="145.7" width="3" height="2.0" fill="#e47a34"/><rect x="531" y="139.0" width="1" height="12.3" fill="#e47a34"/><rect x="530" y="139.8" width="3" height="6.9" fill="#f39548"/><rect x="535" y="135.9" width="1" height="33.9" fill="#e47a34"/><rect x="534" y="139.0" width="3" height="30.0" fill="#e47a34"/><rect x="535" y="140.0" width="1" height="28.0" fill="#3a4149"/><rect x="539" y="158.3" width="1" height="18.5" fill="#e47a34"/><rect x="538" y="165.2" width="3" height="2.3" fill="#f39548"/><rect x="543" y="156.0" width="1" height="12.3" fill="#e47a34"/><rect x="542" y="164.4" width="3" height="2.0" fill="#f39548"/><rect x="547" y="162.9" width="1" height="16.1" fill="#e47a34"/><rect x="546" y="164.4" width="3" height="7.0" fill="#e47a34"/><rect x="547" y="165.4" width="1" height="5.0" fill="#3a4149"/><rect x="551" y="167.5" width="1" height="12.4" fill="#e47a34"/><rect x="550" y="170.6" width="3" height="4.6" fill="#e47a34"/><rect x="551" y="171.6" width="1" height="2.6" fill="#3a4149"/><rect x="555" y="166.0" width="1" height="20.0" fill="#e47a34"/><rect x="554" y="175.2" width="3" height="9.3" fill="#e47a34"/><rect x="555" y="176.2" width="1" height="7.3" fill="#3a4149"/><rect x="560" y="180.0" width="1" height="29.3" fill="#e47a34"/><rect x="559" y="183.0" width="3" height="24.4" fill="#e47a34"/><rect x="560" y="184.0" width="1" height="22.4" fill="#3a4149"/><rect x="564" y="199.0" width="1" height="14.0" fill="#e47a34"/><rect x="563" y="203.0" width="3" height="3.0" fill="#f39548"/><rect x="568" y="184.8" width="1" height="27.2" fill="#e47a34"/><rect x="567" y="202.7" width="3" height="1.9" fill="#f39548"/><rect x="572" y="190.5" width="1" height="16.9" fill="#e47a34"/><rect x="571" y="195.2" width="3" height="5.6" fill="#f39548"/><rect x="576" y="183.9" width="1" height="12.2" fill="#e47a34"/><rect x="575" y="192.3" width="3" height="2.0" fill="#f39548"/><rect x="580" y="190.5" width="1" height="30.1" fill="#e47a34"/><rect x="579" y="192.4" width="3" height="24.5" fill="#e47a34"/><rect x="580" y="193.4" width="1" height="22.5" fill="#3a4149"/><rect x="584" y="208.4" width="1" height="24.5" fill="#e47a34"/><rect x="583" y="216.0" width="3" height="16.0" fill="#e47a34"/><rect x="584" y="217.0" width="1" height="14.0" fill="#3a4149"/><rect x="588" y="208.4" width="1" height="24.5" fill="#e47a34"/><rect x="587" y="211.2" width="3" height="20.8" fill="#f39548"/><rect x="592" y="208.4" width="1" height="15.0" fill="#e47a34"/><rect x="591" y="210.3" width="3" height="7.5" fill="#e47a34"/><rect x="592" y="211.3" width="1" height="5.5" fill="#3a4149"/><rect x="596" y="208.4" width="1" height="14.1" fill="#e47a34"/><rect x="595" y="213.0" width="3" height="2.0" fill="#f39548"/><rect x="601" y="205.6" width="1" height="16.9" fill="#e47a34"/><rect x="600" y="213.0" width="3" height="2.0" fill="#f39548"/><rect x="605" y="208.4" width="1" height="32.0" fill="#e47a34"/><rect x="604" y="212.0" width="3" height="25.6" fill="#e47a34"/><rect x="605" y="213.0" width="1" height="23.6" fill="#3a4149"/><rect x="609" y="232.0" width="1" height="19.7" fill="#e47a34"/><rect x="608" y="236.6" width="3" height="4.7" fill="#e47a34"/><rect x="609" y="237.6" width="1" height="2.7" fill="#3a4149"/><rect x="613" y="234.7" width="1" height="15.1" fill="#e47a34"/><rect x="612" y="240.4" width="3" height="2.8" fill="#e47a34"/><rect x="617" y="222.5" width="1" height="21.7" fill="#e47a34"/><rect x="616" y="225.3" width="3" height="17.0" fill="#f39548"/><rect x="621" y="227.2" width="1" height="13.2" fill="#e47a34"/><rect x="620" y="229.0" width="3" height="10.5" fill="#e47a34"/><rect x="621" y="230.0" width="1" height="8.5" fill="#3a4149"/><rect x="625" y="236.6" width="1" height="16.0" fill="#e47a34"/><rect x="624" y="238.5" width="3" height="11.3" fill="#e47a34"/><rect x="625" y="239.5" width="1" height="9.3" fill="#3a4149"/><rect x="629" y="248.0" width="1" height="22.5" fill="#e47a34"/><rect x="628" y="248.9" width="3" height="11.3" fill="#e47a34"/><rect x="629" y="249.9" width="1" height="9.3" fill="#3a4149"/><rect x="633" y="248.9" width="1" height="21.6" fill="#e47a34"/><rect x="632" y="260.0" width="3" height="2.0" fill="#f39548"/><rect x="637" y="203.7" width="1" height="56.5" fill="#e47a34"/><rect x="636" y="217.8" width="3" height="40.5" fill="#f39548"/><rect x="642" y="208.4" width="1" height="16.9" fill="#e47a34"/><rect x="641" y="216.9" width="3" height="7.5" fill="#e47a34"/><rect x="642" y="217.9" width="1" height="5.5" fill="#3a4149"/><rect x="646" y="214.0" width="1" height="9.4" fill="#e47a34"/><rect x="645" y="218.0" width="3" height="2.0" fill="#f39548"/><rect x="650" y="215.0" width="1" height="22.6" fill="#e47a34"/><rect x="649" y="222.5" width="3" height="10.4" fill="#e47a34"/><rect x="650" y="223.5" width="1" height="8.4" fill="#3a4149"/><rect x="654" y="215.9" width="1" height="18.8" fill="#e47a34"/><rect x="653" y="225.0" width="3" height="2.0" fill="#f39548"/><rect x="658" y="224.4" width="1" height="17.9" fill="#e47a34"/><rect x="657" y="232.0" width="3" height="2.0" fill="#f39548"/><rect x="662" y="191.4" width="1" height="40.6" fill="#e47a34"/><rect x="661" y="197.0" width="3" height="34.0" fill="#f39548"/><rect x="666" y="191.4" width="1" height="14.2" fill="#e47a34"/><rect x="665" y="195.2" width="3" height="9.4" fill="#e47a34"/><rect x="666" y="196.2" width="1" height="7.4" fill="#3a4149"/><rect x="670" y="181.7" width="1" height="26.3" fill="#e47a34"/><rect x="669" y="184.8" width="3" height="21.6" fill="#f39548"/><rect x="674" y="181.7" width="1" height="12.3" fill="#e47a34"/><rect x="673" y="190.0" width="3" height="2.0" fill="#e47a34"/><rect x="678" y="185.6" width="1" height="16.2" fill="#e47a34"/><rect x="677" y="190.7" width="3" height="2.0" fill="#e47a34"/><rect x="683" y="180.0" width="1" height="23.3" fill="#e47a34"/><rect x="682" y="186.4" width="3" height="6.1" fill="#f39548"/><rect x="687" y="165.5" width="1" height="25.5" fill="#e47a34"/><rect x="686" y="167.8" width="3" height="20.2" fill="#f39548"/><rect x="691" y="160.0" width="1" height="13.2" fill="#e47a34"/><rect x="690" y="166.8" width="3" height="2.0" fill="#e47a34"/><rect x="695" y="163.2" width="1" height="13.9" fill="#e47a34"/><rect x="694" y="168.0" width="3" height="2.0" fill="#f39548"/><rect x="699" y="160.9" width="1" height="12.3" fill="#e47a34"/><rect x="698" y="165.3" width="3" height="2.0" fill="#f39548"/><rect x="703" y="161.7" width="1" height="20.8" fill="#e47a34"/><rect x="702" y="164.8" width="3" height="7.7" fill="#e47a34"/><rect x="703" y="165.8" width="1" height="5.7" fill="#3a4149"/><rect x="707" y="157.0" width="1" height="18.6" fill="#e47a34"/><rect x="706" y="168.6" width="3" height="3.1" fill="#f39548"/><rect x="711" y="157.0" width="1" height="14.7" fill="#e47a34"/><rect x="710" y="164.5" width="3" height="2.0" fill="#f39548"/><rect x="715" y="161.7" width="1" height="10.8" fill="#e47a34"/><rect x="714" y="164.0" width="3" height="3.0" fill="#e47a34"/><rect x="720" y="156.3" width="1" height="12.3" fill="#e47a34"/><rect x="719" y="160.9" width="3" height="5.4" fill="#f39548"/><rect x="724" y="157.0" width="1" height="13.2" fill="#e47a34"/><rect x="723" y="160.0" width="3" height="9.4" fill="#e47a34"/><rect x="724" y="161.0" width="1" height="7.4" fill="#3a4149"/><rect x="728" y="163.2" width="1" height="16.2" fill="#e47a34"/><rect x="727" y="166.0" width="3" height="2.0" fill="#f39548"/><rect x="732" y="157.0" width="1" height="11.6" fill="#e47a34"/><rect x="731" y="160.9" width="3" height="3.1" fill="#f39548"/><rect x="736" y="144.7" width="1" height="20.1" fill="#e47a34"/><rect x="735" y="154.0" width="3" height="6.0" fill="#f39548"/><rect x="740" y="149.3" width="1" height="8.5" fill="#e47a34"/><rect x="739" y="152.4" width="3" height="5.4" fill="#e47a34"/><rect x="740" y="153.4" width="1" height="3.4" fill="#3a4149"/><rect x="744" y="152.4" width="1" height="20.8" fill="#e47a34"/><rect x="743" y="154.7" width="3" height="15.5" fill="#e47a34"/><rect x="744" y="155.7" width="1" height="13.5" fill="#3a4149"/><rect x="748" y="157.8" width="1" height="17.8" fill="#e47a34"/><rect x="747" y="169.4" width="3" height="4.6" fill="#f39548"/><rect x="752" y="163.2" width="1" height="15.4" fill="#e47a34"/><rect x="751" y="167.0" width="3" height="2.0" fill="#f39548"/><rect x="756" y="160.1" width="1" height="13.9" fill="#e47a34"/><rect x="755" y="161.7" width="3" height="11.5" fill="#f39548"/><rect x="761" y="147.0" width="1" height="19.0" fill="#e47a34"/><rect x="760" y="155.0" width="3" height="8.0" fill="#f39548"/><rect x="765" y="154.6" width="1" height="9.2" fill="#e47a34"/><rect x="764" y="156.4" width="3" height="4.3" fill="#e47a34"/><rect x="765" y="157.4" width="1" height="2.3" fill="#3a4149"/><rect x="769" y="155.2" width="1" height="15.4" fill="#e47a34"/><rect x="768" y="159.5" width="3" height="10.5" fill="#e47a34"/><rect x="769" y="160.5" width="1" height="8.5" fill="#3a4149"/><rect x="773" y="155.2" width="1" height="14.8" fill="#e47a34"/><rect x="772" y="157.0" width="3" height="12.4" fill="#f39548"/><rect x="777" y="141.0" width="1" height="16.7" fill="#e47a34"/><rect x="776" y="148.4" width="3" height="8.0" fill="#f39548"/><rect x="781" y="145.3" width="1" height="11.7" fill="#e47a34"/><rect x="780" y="146.5" width="3" height="3.7" fill="#e47a34"/><rect x="781" y="147.5" width="1" height="1.7" fill="#3a4149"/><rect x="785" y="144.0" width="1" height="13.7" fill="#e47a34"/><rect x="784" y="148.0" width="3" height="2.0" fill="#f39548"/><rect x="789" y="144.0" width="1" height="7.5" fill="#e47a34"/><rect x="788" y="148.6" width="3" height="2.0" fill="#e47a34"/><rect x="793" y="138.5" width="1" height="13.0" fill="#e47a34"/><rect x="792" y="139.8" width="3" height="10.4" fill="#f39548"/><rect x="797" y="137.3" width="1" height="23.4" fill="#e47a34"/><rect x="796" y="138.5" width="3" height="21.6" fill="#e47a34"/><rect x="797" y="139.5" width="1" height="19.6" fill="#3a4149"/><rect x="802" y="144.0" width="1" height="21.7" fill="#e47a34"/><rect x="801" y="150.2" width="3" height="9.3" fill="#f39548"/><rect x="806" y="142.2" width="1" height="9.3" fill="#e47a34"/><rect x="805" y="148.6" width="3" height="2.0" fill="#f39548"/><rect x="810" y="141.0" width="1" height="27.8" fill="#e47a34"/><rect x="809" y="149.6" width="3" height="8.7" fill="#e47a34"/><rect x="810" y="150.6" width="1" height="6.7" fill="#3a4149"/><rect x="814" y="154.6" width="1" height="12.9" fill="#e47a34"/><rect x="813" y="160.4" width="3" height="2.0" fill="#e47a34"/><rect x="818" y="155.8" width="1" height="12.3" fill="#e47a34"/><rect x="817" y="161.6" width="3" height="2.0" fill="#f39548"/><rect x="822" y="155.8" width="1" height="11.1" fill="#e47a34"/><rect x="821" y="160.7" width="3" height="3.1" fill="#e47a34"/><rect x="822" y="161.7" width="1" height="1.1" fill="#3a4149"/><rect x="826" y="152.7" width="1" height="12.3" fill="#e47a34"/><rect x="825" y="154.6" width="3" height="9.8" fill="#f39548"/><rect x="830" y="150.2" width="1" height="14.8" fill="#e47a34"/><rect x="829" y="153.0" width="3" height="2.0" fill="#f39548"/><rect x="834" y="142.8" width="1" height="15.5" fill="#e47a34"/><rect x="833" y="153.3" width="3" height="4.4" fill="#e47a34"/><rect x="834" y="154.3" width="1" height="2.4" fill="#3a4149"/><rect x="838" y="153.3" width="1" height="4.7" fill="#e47a34"/><rect x="837" y="156.0" width="3" height="2.0" fill="#f39548"/><rect x="843" y="152.7" width="1" height="5.0" fill="#e47a34"/><rect x="842" y="155.4" width="3" height="2.0" fill="#e47a34"/><rect x="847" y="147.2" width="1" height="11.7" fill="#e47a34"/><rect x="846" y="150.2" width="3" height="6.8" fill="#f39548"/></g>
<g shape-rendering="crispEdges">
<rect x="16" y="138" width="883" height="2" fill="#b3282a"/>
<rect x="16" y="152" width="883" height="1" fill="#dcdcdc"/>
<rect x="16" y="182" width="883" height="1" fill="#1f9a22"/>
<rect x="16" y="183" width="883" height="1" fill="#3fd43f"/>
</g>
<g clip-path="url(#cpm)" fill="none" stroke-linejoin="round"><polyline points="15.5,82.0 32.5,97.8 43.6,109.8 54.7,125.5 67.7,136.7 75.0,135.7 82.5,132.6 93.6,132.6 103.0,134.8 112.0,137.6 147.0,137.0 158.0,133.3 169.0,125.0 180.4,118.5 191.5,114.0 199.0,115.7 205.0,118.0 213.6,119.0 222.3,111.6 231.0,105.7 239.6,112.6 248.2,121.3 256.8,128.8 269.8,130.0 278.4,131.0 287.0,133.2 295.7,131.6 300.0,131.0 314.8,126.2 324.7,123.0 339.5,116.7 356.8,116.0 364.2,112.6 374.0,112.0 376.5,110.0 391.4,110.0 395.0,109.0 408.6,109.0 416.0,111.0 423.4,113.3 432.0,116.4 438.2,115.2 450.6,115.2 469.0,115.2 481.4,114.6 495.0,115.2 508.5,115.8 520.9,124.3 533.2,130.5 544.0,138.2 554.8,147.5 567.2,159.8 576.4,169.0 585.7,178.3 595.2,184.8 606.5,194.3 617.8,205.6 633.8,220.6 649.8,220.6 657.3,223.4 664.9,219.7 670.0,216.5 682.3,209.5 697.8,197.2 708.6,191.0 721.0,184.0 731.7,181.0 742.5,174.8 754.9,174.0 762.6,171.0 772.3,170.0 782.2,165.0 793.3,160.5 805.7,158.5 813.0,160.1 828.0,160.1 830.4,158.9 845.2,158.9 847.7,156.4" stroke="#1e1ebc" stroke-width="1.5"/><polyline points="15.5,100.5 25.0,102.4 41.8,109.8 56.6,117.2 69.5,122.8 88.0,122.8 97.3,123.7 112.0,127.4 137.8,128.7 156.3,127.8 169.0,125.0 184.0,121.3 197.0,120.4 207.0,121.8 218.0,119.0 232.0,114.8 243.9,119.0 256.8,124.5 274.0,125.6 291.4,126.7 302.0,126.0 324.7,124.3 337.0,120.6 359.3,120.0 364.2,118.8 374.0,118.8 377.8,116.3 395.0,116.3 398.7,114.6 418.5,115.2 422.2,116.4 432.0,116.4 484.0,116.4 495.0,115.2 510.0,115.8 520.9,119.7 531.7,122.0 544.0,125.9 554.8,129.7 567.2,137.4 578.0,142.8 588.0,150.6 602.7,160.4 621.6,169.8 634.7,179.2 649.8,184.8 661.1,188.6 670.5,190.5 683.9,190.2 693.1,187.1 716.3,184.8 728.6,181.7 742.5,177.9 756.4,177.9 758.0,176.8 773.6,176.8 776.0,175.0 790.9,171.2 803.8,170.0 804.4,168.8 828.0,168.8 829.0,166.9 847.0,166.7" stroke="#bd2c28" stroke-width="1.7"/></g>
<g clip-path="url(#cpd)"><rect x="18" y="292.5" width="2" height="7.5" fill="#b82c2c" opacity="0.9"/><rect x="22" y="292.5" width="2" height="8.7" fill="#b82c2c" opacity="0.9"/><rect x="26" y="292.5" width="2" height="7.7" fill="#b82c2c" opacity="0.9"/><rect x="30" y="292.5" width="2" height="10.1" fill="#b82c2c" opacity="0.9"/><rect x="34" y="292.5" width="2" height="12.1" fill="#b82c2c" opacity="0.9"/><rect x="39" y="292.5" width="2" height="12.5" fill="#b82c2c" opacity="0.9"/><rect x="43" y="292.5" width="2" height="11.6" fill="#b82c2c" opacity="0.9"/><rect x="47" y="292.5" width="2" height="10.6" fill="#b82c2c" opacity="0.9"/><rect x="51" y="292.5" width="2" height="9.7" fill="#b82c2c" opacity="0.9"/><rect x="55" y="292.5" width="2" height="7.9" fill="#b82c2c" opacity="0.9"/><rect x="59" y="292.5" width="2" height="6.8" fill="#b82c2c" opacity="0.9"/><rect x="63" y="292.5" width="2" height="5.3" fill="#b82c2c" opacity="0.9"/><rect x="67" y="292.5" width="2" height="3.6" fill="#b82c2c" opacity="0.9"/><rect x="71" y="292.5" width="2" height="2.1" fill="#b82c2c" opacity="0.9"/><rect x="80" y="289.0" width="2" height="3.5" fill="#b82c2c" opacity="0.9"/><rect x="84" y="288.3" width="2" height="4.2" fill="#b82c2c" opacity="0.9"/><rect x="88" y="288.2" width="2" height="4.3" fill="#b82c2c" opacity="0.9"/><rect x="92" y="288.0" width="2" height="4.5" fill="#b82c2c" opacity="0.9"/><rect x="96" y="288.4" width="2" height="4.1" fill="#b82c2c" opacity="0.9"/><rect x="100" y="288.7" width="2" height="3.8" fill="#b82c2c" opacity="0.9"/><rect x="104" y="289.4" width="2" height="3.1" fill="#b82c2c" opacity="0.9"/><rect x="178" y="291.4" width="2" height="1.1" fill="#b82c2c" opacity="0.9"/><rect x="182" y="290.2" width="2" height="2.2" fill="#b82c2c" opacity="0.9"/><rect x="186" y="289.6" width="2" height="2.9" fill="#b82c2c" opacity="0.9"/><rect x="190" y="289.8" width="2" height="2.7" fill="#b82c2c" opacity="0.9"/><rect x="194" y="290.9" width="2" height="1.6" fill="#b82c2c" opacity="0.9"/><rect x="199" y="292.5" width="2" height="0.8" fill="#b82c2c" opacity="0.9"/><rect x="203" y="292.5" width="2" height="2.1" fill="#b82c2c" opacity="0.9"/><rect x="207" y="292.5" width="2" height="2.5" fill="#b82c2c" opacity="0.9"/><rect x="211" y="292.5" width="2" height="2.9" fill="#b82c2c" opacity="0.9"/><rect x="215" y="292.5" width="2" height="1.2" fill="#b82c2c" opacity="0.9"/><rect x="223" y="290.8" width="2" height="1.7" fill="#b82c2c" opacity="0.9"/><rect x="227" y="290.2" width="2" height="2.2" fill="#b82c2c" opacity="0.9"/><rect x="231" y="290.9" width="2" height="1.6" fill="#b82c2c" opacity="0.9"/><rect x="240" y="292.5" width="2" height="3.9" fill="#b82c2c" opacity="0.9"/><rect x="244" y="292.5" width="2" height="6.7" fill="#b82c2c" opacity="0.9"/><rect x="248" y="292.5" width="2" height="7.9" fill="#b82c2c" opacity="0.9"/><rect x="252" y="292.5" width="2" height="8.8" fill="#b82c2c" opacity="0.9"/><rect x="256" y="292.5" width="2" height="7.0" fill="#b82c2c" opacity="0.9"/><rect x="260" y="292.5" width="2" height="5.0" fill="#b82c2c" opacity="0.9"/><rect x="264" y="292.5" width="2" height="1.4" fill="#b82c2c" opacity="0.9"/><rect x="301" y="292.5" width="2" height="1.1" fill="#b82c2c" opacity="0.9"/><rect x="305" y="292.5" width="2" height="1.0" fill="#b82c2c" opacity="0.9"/><rect x="416" y="292.5" width="2" height="1.6" fill="#b82c2c" opacity="0.9"/><rect x="420" y="292.5" width="2" height="2.5" fill="#b82c2c" opacity="0.9"/><rect x="424" y="292.5" width="2" height="2.7" fill="#b82c2c" opacity="0.9"/><rect x="428" y="292.5" width="2" height="2.9" fill="#b82c2c" opacity="0.9"/><rect x="432" y="292.5" width="2" height="2.8" fill="#b82c2c" opacity="0.9"/><rect x="436" y="292.5" width="2" height="1.3" fill="#b82c2c" opacity="0.9"/><rect x="510" y="292.5" width="2" height="1.2" fill="#b82c2c" opacity="0.9"/><rect x="514" y="292.5" width="2" height="1.8" fill="#b82c2c" opacity="0.9"/><rect x="518" y="292.5" width="2" height="2.2" fill="#b82c2c" opacity="0.9"/><rect x="523" y="292.5" width="2" height="2.8" fill="#b82c2c" opacity="0.9"/><rect x="527" y="292.5" width="2" height="3.2" fill="#b82c2c" opacity="0.9"/><rect x="531" y="292.5" width="2" height="3.7" fill="#b82c2c" opacity="0.9"/><rect x="535" y="292.5" width="2" height="4.2" fill="#b82c2c" opacity="0.9"/><rect x="539" y="292.5" width="2" height="4.7" fill="#b82c2c" opacity="0.9"/><rect x="543" y="292.5" width="2" height="5.3" fill="#b82c2c" opacity="0.9"/><rect x="547" y="292.5" width="2" height="5.8" fill="#b82c2c" opacity="0.9"/><rect x="551" y="292.5" width="2" height="6.1" fill="#b82c2c" opacity="0.9"/><rect x="555" y="292.5" width="2" height="6.0" fill="#b82c2c" opacity="0.9"/><rect x="560" y="292.5" width="2" height="6.0" fill="#b82c2c" opacity="0.9"/><rect x="564" y="292.5" width="2" height="5.9" fill="#b82c2c" opacity="0.9"/><rect x="568" y="292.5" width="2" height="5.9" fill="#b82c2c" opacity="0.9"/><rect x="572" y="292.5" width="2" height="5.8" fill="#b82c2c" opacity="0.9"/><rect x="576" y="292.5" width="2" height="5.7" fill="#b82c2c" opacity="0.9"/><rect x="580" y="292.5" width="2" height="5.4" fill="#b82c2c" opacity="0.9"/><rect x="584" y="292.5" width="2" height="5.1" fill="#b82c2c" opacity="0.9"/><rect x="588" y="292.5" width="2" height="4.8" fill="#b82c2c" opacity="0.9"/><rect x="592" y="292.5" width="2" height="4.5" fill="#b82c2c" opacity="0.9"/><rect x="596" y="292.5" width="2" height="4.3" fill="#b82c2c" opacity="0.9"/><rect x="601" y="292.5" width="2" height="3.8" fill="#b82c2c" opacity="0.9"/><rect x="605" y="292.5" width="2" height="3.3" fill="#b82c2c" opacity="0.9"/><rect x="609" y="292.5" width="2" height="2.7" fill="#b82c2c" opacity="0.9"/><rect x="613" y="292.5" width="2" height="2.2" fill="#b82c2c" opacity="0.9"/><rect x="617" y="292.5" width="2" height="1.5" fill="#b82c2c" opacity="0.9"/><rect x="621" y="292.5" width="2" height="0.8" fill="#b82c2c" opacity="0.9"/><rect x="646" y="290.5" width="2" height="2.0" fill="#b82c2c" opacity="0.9"/><rect x="650" y="289.6" width="2" height="2.9" fill="#b82c2c" opacity="0.9"/><rect x="654" y="288.9" width="2" height="3.6" fill="#b82c2c" opacity="0.9"/><rect x="658" y="288.2" width="2" height="4.2" fill="#b82c2c" opacity="0.9"/><rect x="662" y="287.5" width="2" height="5.0" fill="#b82c2c" opacity="0.9"/><rect x="666" y="286.6" width="2" height="5.9" fill="#b82c2c" opacity="0.9"/><rect x="670" y="285.8" width="2" height="6.7" fill="#b82c2c" opacity="0.9"/><rect x="674" y="285.4" width="2" height="7.1" fill="#b82c2c" opacity="0.9"/><rect x="678" y="285.4" width="2" height="7.1" fill="#b82c2c" opacity="0.9"/><rect x="683" y="285.2" width="2" height="7.2" fill="#b82c2c" opacity="0.9"/><rect x="687" y="285.2" width="2" height="7.3" fill="#b82c2c" opacity="0.9"/><rect x="691" y="285.1" width="2" height="7.4" fill="#b82c2c" opacity="0.9"/><rect x="695" y="285.1" width="2" height="7.4" fill="#b82c2c" opacity="0.9"/><rect x="699" y="285.5" width="2" height="7.0" fill="#b82c2c" opacity="0.9"/><rect x="703" y="286.0" width="2" height="6.5" fill="#b82c2c" opacity="0.9"/><rect x="707" y="286.5" width="2" height="6.0" fill="#b82c2c" opacity="0.9"/><rect x="711" y="286.9" width="2" height="5.6" fill="#b82c2c" opacity="0.9"/><rect x="715" y="288.2" width="2" height="4.3" fill="#b82c2c" opacity="0.9"/><rect x="720" y="289.9" width="2" height="2.6" fill="#b82c2c" opacity="0.9"/><rect x="724" y="291.3" width="2" height="1.2" fill="#b82c2c" opacity="0.9"/><rect x="752" y="292.5" width="2" height="1.0" fill="#b82c2c" opacity="0.9"/><rect x="756" y="292.5" width="2" height="1.5" fill="#b82c2c" opacity="0.9"/><rect x="761" y="292.5" width="2" height="2.0" fill="#b82c2c" opacity="0.9"/><rect x="765" y="292.5" width="2" height="2.1" fill="#b82c2c" opacity="0.9"/><rect x="769" y="292.5" width="2" height="2.1" fill="#b82c2c" opacity="0.9"/><rect x="773" y="292.5" width="2" height="2.2" fill="#b82c2c" opacity="0.9"/><rect x="777" y="292.5" width="2" height="2.2" fill="#b82c2c" opacity="0.9"/><rect x="781" y="292.5" width="2" height="2.3" fill="#b82c2c" opacity="0.9"/><rect x="785" y="292.5" width="2" height="2.3" fill="#b82c2c" opacity="0.9"/><rect x="789" y="292.5" width="2" height="2.4" fill="#b82c2c" opacity="0.9"/><rect x="793" y="292.5" width="2" height="2.4" fill="#b82c2c" opacity="0.9"/><rect x="797" y="292.5" width="2" height="2.5" fill="#b82c2c" opacity="0.9"/><rect x="802" y="292.5" width="2" height="2.5" fill="#b82c2c" opacity="0.9"/><rect x="806" y="292.5" width="2" height="2.4" fill="#b82c2c" opacity="0.9"/><rect x="810" y="292.5" width="2" height="2.4" fill="#b82c2c" opacity="0.9"/><rect x="814" y="292.5" width="2" height="2.3" fill="#b82c2c" opacity="0.9"/><rect x="818" y="292.5" width="2" height="2.3" fill="#b82c2c" opacity="0.9"/><rect x="822" y="292.5" width="2" height="2.3" fill="#b82c2c" opacity="0.9"/><rect x="826" y="292.5" width="2" height="2.2" fill="#b82c2c" opacity="0.9"/><rect x="830" y="292.5" width="2" height="2.2" fill="#b82c2c" opacity="0.9"/><rect x="834" y="292.5" width="2" height="2.1" fill="#b82c2c" opacity="0.9"/><rect x="838" y="292.5" width="2" height="2.1" fill="#b82c2c" opacity="0.9"/><rect x="843" y="292.5" width="2" height="2.0" fill="#b82c2c" opacity="0.9"/><rect x="847" y="292.5" width="2" height="2.0" fill="#b82c2c" opacity="0.9"/></g>
<g clip-path="url(#cpd)" fill="none"><polyline points="17.6,291.5 20.0,291.3 35.3,304.4 48.0,313.0 55.9,317.2 63.7,317.2 73.0,312.2 82.6,304.4 94.0,299.6 101.7,299.6 111.2,301.0 124.6,299.6 143.7,295.8 159.0,292.0 168.5,285.3 178.0,281.5 189.5,281.8 201.0,286.2 214.4,289.1 225.0,284.3 230.7,281.5 236.5,285.3 244.1,296.7 251.7,302.8 259.4,302.5 274.7,299.0 286.1,298.6 301.4,296.7 316.7,290.0 339.6,284.9 358.7,286.8 377.8,286.8 389.2,288.1 408.3,288.1 427.4,295.8 435.0,295.8 442.0,293.4 449.5,292.9 462.9,293.3 504.9,292.5 516.4,297.7 526.0,301.0 535.5,304.4 550.8,308.2 564.1,315.8 573.7,315.5 585.2,318.1 602.3,318.1 611.9,319.3 621.4,317.7 632.9,320.6 642.4,314.9 650.1,310.1 657.0,308.2 662.6,304.4 672.2,295.8 681.7,291.0 693.2,283.4 706.6,280.5 719.9,278.6 731.4,280.5 750.5,283.0 769.6,284.3 788.7,283.0 807.8,284.3 821.2,288.1 836.4,289.1 846.0,289.1" stroke="#0e0e66" stroke-width="1.2" stroke-linejoin="round"/>
<circle cx="34.5" cy="291.3" r="1.75" fill="#e02a2a"/><circle cx="39.5" cy="295.1" r="1.75" fill="#e02a2a"/><circle cx="43.5" cy="297.1" r="1.75" fill="#e02a2a"/><circle cx="47.5" cy="300.0" r="1.75" fill="#e02a2a"/><circle cx="51.5" cy="302.7" r="1.75" fill="#e02a2a"/><circle cx="55.5" cy="305.2" r="1.75" fill="#e02a2a"/><circle cx="59.5" cy="307.1" r="1.75" fill="#e02a2a"/><circle cx="63.5" cy="308.9" r="1.75" fill="#e02a2a"/><circle cx="67.5" cy="310.0" r="1.75" fill="#e02a2a"/><circle cx="71.5" cy="311.1" r="1.75" fill="#e02a2a"/><circle cx="75.5" cy="310.7" r="1.75" fill="#e02a2a"/><circle cx="80.5" cy="309.1" r="1.75" fill="#e02a2a"/><circle cx="84.5" cy="307.8" r="1.75" fill="#e02a2a"/><circle cx="88.5" cy="306.6" r="1.75" fill="#e02a2a"/><circle cx="92.5" cy="305.3" r="1.75" fill="#e02a2a"/><circle cx="96.5" cy="304.1" r="1.75" fill="#e02a2a"/><circle cx="100.5" cy="302.9" r="1.75" fill="#e02a2a"/><circle cx="104.5" cy="302.2" r="1.75" fill="#e02a2a"/><circle cx="108.5" cy="301.7" r="1.75" fill="#e02a2a"/><circle cx="112.5" cy="301.2" r="1.75" fill="#e02a2a"/><circle cx="116.5" cy="300.7" r="1.75" fill="#e02a2a"/><circle cx="121.5" cy="300.0" r="1.75" fill="#e02a2a"/><circle cx="125.5" cy="299.5" r="1.75" fill="#e02a2a"/><circle cx="129.5" cy="299.0" r="1.75" fill="#e02a2a"/><circle cx="133.5" cy="298.5" r="1.75" fill="#e02a2a"/><circle cx="137.5" cy="298.0" r="1.75" fill="#e02a2a"/><circle cx="141.5" cy="297.4" r="1.75" fill="#e02a2a"/><circle cx="145.5" cy="296.6" r="1.75" fill="#e02a2a"/><circle cx="149.5" cy="295.8" r="1.75" fill="#e02a2a"/><circle cx="153.5" cy="295.0" r="1.75" fill="#e02a2a"/><circle cx="157.5" cy="294.2" r="1.75" fill="#e02a2a"/><circle cx="162.5" cy="292.7" r="1.75" fill="#e02a2a"/><circle cx="166.5" cy="291.3" r="1.75" fill="#e02a2a"/><circle cx="170.5" cy="289.8" r="1.75" fill="#e02a2a"/><circle cx="174.5" cy="288.4" r="1.75" fill="#e02a2a"/><circle cx="178.5" cy="287.1" r="1.75" fill="#e02a2a"/><circle cx="182.5" cy="286.0" r="1.75" fill="#e02a2a"/><circle cx="186.5" cy="284.9" r="1.75" fill="#e02a2a"/><circle cx="190.5" cy="283.8" r="1.75" fill="#e02a2a"/><circle cx="194.5" cy="283.2" r="1.75" fill="#e02a2a"/><circle cx="199.5" cy="284.2" r="1.75" fill="#e02a2a"/><circle cx="203.5" cy="285.0" r="1.75" fill="#e02a2a"/><circle cx="207.5" cy="285.8" r="1.75" fill="#e02a2a"/><circle cx="211.5" cy="286.6" r="1.75" fill="#e02a2a"/><circle cx="215.5" cy="287.1" r="1.75" fill="#e02a2a"/><circle cx="219.5" cy="286.6" r="1.75" fill="#e02a2a"/><circle cx="223.5" cy="286.1" r="1.75" fill="#e02a2a"/><circle cx="227.5" cy="285.5" r="1.75" fill="#e02a2a"/><circle cx="231.5" cy="284.2" r="1.75" fill="#e02a2a"/><circle cx="235.5" cy="284.4" r="1.75" fill="#e02a2a"/><circle cx="240.5" cy="285.4" r="1.75" fill="#e02a2a"/><circle cx="244.5" cy="287.6" r="1.75" fill="#e02a2a"/><circle cx="248.5" cy="289.9" r="1.75" fill="#e02a2a"/><circle cx="252.5" cy="291.8" r="1.75" fill="#e02a2a"/><circle cx="256.5" cy="293.6" r="1.75" fill="#e02a2a"/><circle cx="260.5" cy="295.5" r="1.75" fill="#e02a2a"/><circle cx="264.5" cy="296.8" r="1.75" fill="#e02a2a"/><circle cx="268.5" cy="297.1" r="1.75" fill="#e02a2a"/><circle cx="272.5" cy="297.5" r="1.75" fill="#e02a2a"/><circle cx="276.5" cy="297.8" r="1.75" fill="#e02a2a"/><circle cx="281.5" cy="298.2" r="1.75" fill="#e02a2a"/><circle cx="285.5" cy="298.6" r="1.75" fill="#e02a2a"/><circle cx="289.5" cy="298.2" r="1.75" fill="#e02a2a"/><circle cx="293.5" cy="297.7" r="1.75" fill="#e02a2a"/><circle cx="297.5" cy="297.2" r="1.75" fill="#e02a2a"/><circle cx="301.5" cy="296.7" r="1.75" fill="#e02a2a"/><circle cx="305.5" cy="295.9" r="1.75" fill="#e02a2a"/><circle cx="309.5" cy="295.1" r="1.75" fill="#e02a2a"/><circle cx="313.5" cy="294.3" r="1.75" fill="#e02a2a"/><circle cx="317.5" cy="293.5" r="1.75" fill="#e02a2a"/><circle cx="322.5" cy="292.5" r="1.75" fill="#e02a2a"/><circle cx="326.5" cy="291.6" r="1.75" fill="#e02a2a"/><circle cx="330.5" cy="290.7" r="1.75" fill="#e02a2a"/><circle cx="334.5" cy="289.8" r="1.75" fill="#e02a2a"/><circle cx="338.5" cy="288.9" r="1.75" fill="#e02a2a"/><circle cx="342.5" cy="288.5" r="1.75" fill="#e02a2a"/><circle cx="346.5" cy="288.2" r="1.75" fill="#e02a2a"/><circle cx="350.5" cy="287.8" r="1.75" fill="#e02a2a"/><circle cx="354.5" cy="287.5" r="1.75" fill="#e02a2a"/><circle cx="359.5" cy="287.2" r="1.75" fill="#e02a2a"/><circle cx="363.5" cy="287.1" r="1.75" fill="#e02a2a"/><circle cx="367.5" cy="287.1" r="1.75" fill="#e02a2a"/><circle cx="371.5" cy="287.0" r="1.75" fill="#e02a2a"/><circle cx="375.5" cy="287.0" r="1.75" fill="#e02a2a"/><circle cx="379.5" cy="286.9" r="1.75" fill="#e02a2a"/><circle cx="383.5" cy="286.9" r="1.75" fill="#e02a2a"/><circle cx="387.5" cy="286.8" r="1.75" fill="#e02a2a"/><circle cx="391.5" cy="286.9" r="1.75" fill="#e02a2a"/><circle cx="395.5" cy="287.2" r="1.75" fill="#e02a2a"/><circle cx="400.5" cy="287.4" r="1.75" fill="#e02a2a"/><circle cx="404.5" cy="287.7" r="1.75" fill="#e02a2a"/><circle cx="408.5" cy="287.9" r="1.75" fill="#e02a2a"/><circle cx="412.5" cy="288.2" r="1.75" fill="#e02a2a"/><circle cx="416.5" cy="289.3" r="1.75" fill="#e02a2a"/><circle cx="420.5" cy="290.5" r="1.75" fill="#e02a2a"/><circle cx="424.5" cy="291.7" r="1.75" fill="#e02a2a"/><circle cx="428.5" cy="292.5" r="1.75" fill="#e02a2a"/><circle cx="432.5" cy="292.5" r="1.75" fill="#e02a2a"/><circle cx="436.5" cy="292.5" r="1.75" fill="#e02a2a"/><circle cx="441.5" cy="292.5" r="1.75" fill="#e02a2a"/><circle cx="445.5" cy="292.5" r="1.75" fill="#e02a2a"/><circle cx="449.5" cy="292.5" r="1.75" fill="#e02a2a"/><circle cx="453.5" cy="292.5" r="1.75" fill="#e02a2a"/><circle cx="457.5" cy="292.5" r="1.75" fill="#e02a2a"/><circle cx="461.5" cy="292.5" r="1.75" fill="#e02a2a"/><circle cx="465.5" cy="292.5" r="1.75" fill="#e02a2a"/><circle cx="469.5" cy="292.5" r="1.75" fill="#e02a2a"/><circle cx="473.5" cy="292.5" r="1.75" fill="#e02a2a"/><circle cx="477.5" cy="292.5" r="1.75" fill="#e02a2a"/><circle cx="482.5" cy="292.5" r="1.75" fill="#e02a2a"/><circle cx="486.5" cy="292.5" r="1.75" fill="#e02a2a"/><circle cx="490.5" cy="292.5" r="1.75" fill="#e02a2a"/><circle cx="494.5" cy="292.5" r="1.75" fill="#e02a2a"/><circle cx="498.5" cy="292.5" r="1.75" fill="#e02a2a"/><circle cx="502.5" cy="292.5" r="1.75" fill="#e02a2a"/><circle cx="506.5" cy="292.5" r="1.75" fill="#e02a2a"/><circle cx="510.5" cy="292.8" r="1.75" fill="#e02a2a"/><circle cx="514.5" cy="293.4" r="1.75" fill="#e02a2a"/><circle cx="518.5" cy="294.0" r="1.75" fill="#e02a2a"/><circle cx="523.5" cy="294.7" r="1.75" fill="#e02a2a"/><circle cx="527.5" cy="295.8" r="1.75" fill="#e02a2a"/><circle cx="531.5" cy="296.9" r="1.75" fill="#e02a2a"/><circle cx="535.5" cy="298.0" r="1.75" fill="#e02a2a"/><circle cx="539.5" cy="299.1" r="1.75" fill="#e02a2a"/><circle cx="543.5" cy="300.5" r="1.75" fill="#e02a2a"/><circle cx="547.5" cy="301.9" r="1.75" fill="#e02a2a"/><circle cx="551.5" cy="303.3" r="1.75" fill="#e02a2a"/><circle cx="555.5" cy="304.7" r="1.75" fill="#e02a2a"/><circle cx="560.5" cy="306.3" r="1.75" fill="#e02a2a"/><circle cx="564.5" cy="307.6" r="1.75" fill="#e02a2a"/><circle cx="568.5" cy="308.8" r="1.75" fill="#e02a2a"/><circle cx="572.5" cy="310.1" r="1.75" fill="#e02a2a"/><circle cx="576.5" cy="311.1" r="1.75" fill="#e02a2a"/><circle cx="580.5" cy="312.1" r="1.75" fill="#e02a2a"/><circle cx="584.5" cy="313.0" r="1.75" fill="#e02a2a"/><circle cx="588.5" cy="313.9" r="1.75" fill="#e02a2a"/><circle cx="592.5" cy="314.8" r="1.75" fill="#e02a2a"/><circle cx="596.5" cy="315.2" r="1.75" fill="#e02a2a"/><circle cx="601.5" cy="315.5" r="1.75" fill="#e02a2a"/><circle cx="605.5" cy="315.8" r="1.75" fill="#e02a2a"/><circle cx="609.5" cy="316.0" r="1.75" fill="#e02a2a"/><circle cx="613.5" cy="316.3" r="1.75" fill="#e02a2a"/><circle cx="617.5" cy="316.6" r="1.75" fill="#e02a2a"/><circle cx="621.5" cy="316.8" r="1.75" fill="#e02a2a"/><circle cx="625.5" cy="317.1" r="1.75" fill="#e02a2a"/><circle cx="629.5" cy="317.3" r="1.75" fill="#e02a2a"/><circle cx="633.5" cy="317.0" r="1.75" fill="#e02a2a"/><circle cx="637.5" cy="316.5" r="1.75" fill="#e02a2a"/><circle cx="642.5" cy="315.8" r="1.75" fill="#e02a2a"/><circle cx="646.5" cy="314.7" r="1.75" fill="#e02a2a"/><circle cx="650.5" cy="313.7" r="1.75" fill="#e02a2a"/><circle cx="654.5" cy="312.7" r="1.75" fill="#e02a2a"/><circle cx="658.5" cy="311.2" r="1.75" fill="#e02a2a"/><circle cx="662.5" cy="308.9" r="1.75" fill="#e02a2a"/><circle cx="666.5" cy="306.7" r="1.75" fill="#e02a2a"/><circle cx="670.5" cy="304.5" r="1.75" fill="#e02a2a"/><circle cx="674.5" cy="302.3" r="1.75" fill="#e02a2a"/><circle cx="678.5" cy="300.3" r="1.75" fill="#e02a2a"/><circle cx="683.5" cy="297.8" r="1.75" fill="#e02a2a"/><circle cx="687.5" cy="295.8" r="1.75" fill="#e02a2a"/><circle cx="691.5" cy="293.8" r="1.75" fill="#e02a2a"/><circle cx="695.5" cy="291.8" r="1.75" fill="#e02a2a"/><circle cx="699.5" cy="289.9" r="1.75" fill="#e02a2a"/><circle cx="703.5" cy="288.0" r="1.75" fill="#e02a2a"/><circle cx="707.5" cy="286.1" r="1.75" fill="#e02a2a"/><circle cx="711.5" cy="284.2" r="1.75" fill="#e02a2a"/><circle cx="715.5" cy="283.1" r="1.75" fill="#e02a2a"/><circle cx="720.5" cy="282.1" r="1.75" fill="#e02a2a"/><circle cx="724.5" cy="281.3" r="1.75" fill="#e02a2a"/><circle cx="728.5" cy="280.5" r="1.75" fill="#e02a2a"/><circle cx="732.5" cy="279.9" r="1.75" fill="#e02a2a"/><circle cx="736.5" cy="280.1" r="1.75" fill="#e02a2a"/><circle cx="740.5" cy="280.2" r="1.75" fill="#e02a2a"/><circle cx="744.5" cy="280.3" r="1.75" fill="#e02a2a"/><circle cx="748.5" cy="280.4" r="1.75" fill="#e02a2a"/><circle cx="752.5" cy="280.8" r="1.75" fill="#e02a2a"/><circle cx="756.5" cy="281.3" r="1.75" fill="#e02a2a"/><circle cx="761.5" cy="281.9" r="1.75" fill="#e02a2a"/><circle cx="765.5" cy="282.5" r="1.75" fill="#e02a2a"/><circle cx="769.5" cy="283.0" r="1.75" fill="#e02a2a"/><circle cx="773.5" cy="282.9" r="1.75" fill="#e02a2a"/><circle cx="777.5" cy="282.9" r="1.75" fill="#e02a2a"/><circle cx="781.5" cy="282.8" r="1.75" fill="#e02a2a"/><circle cx="785.5" cy="282.8" r="1.75" fill="#e02a2a"/><circle cx="789.5" cy="282.7" r="1.75" fill="#e02a2a"/><circle cx="793.5" cy="282.6" r="1.75" fill="#e02a2a"/><circle cx="797.5" cy="282.6" r="1.75" fill="#e02a2a"/><circle cx="802.5" cy="282.5" r="1.75" fill="#e02a2a"/><circle cx="806.5" cy="282.4" r="1.75" fill="#e02a2a"/><circle cx="810.5" cy="282.8" r="1.75" fill="#e02a2a"/><circle cx="814.5" cy="283.4" r="1.75" fill="#e02a2a"/><circle cx="818.5" cy="284.0" r="1.75" fill="#e02a2a"/><circle cx="822.5" cy="284.6" r="1.75" fill="#e02a2a"/><circle cx="826.5" cy="285.2" r="1.75" fill="#e02a2a"/><circle cx="830.5" cy="285.7" r="1.75" fill="#e02a2a"/><circle cx="834.5" cy="286.1" r="1.75" fill="#e02a2a"/><circle cx="838.5" cy="286.6" r="1.75" fill="#e02a2a"/><circle cx="843.5" cy="287.1" r="1.75" fill="#e02a2a"/><circle cx="847.5" cy="287.6" r="1.75" fill="#e02a2a"/></g>
<text x="17.3" y="289" font-size="11" fill="#1c1c78" textLength="28.6" lengthAdjust="spacingAndGlyphs">MACD</text>
<g fill="none" stroke="#a9bbcc" stroke-width="1" shape-rendering="crispEdges"><rect x="15.5" y="40.5" width="884" height="231"/><rect x="15.5" y="277.5" width="884" height="45"/><rect x="15.5" y="328.5" width="884" height="75.5"/></g>
<rect x="897" y="50.0" width="6" height="1" fill="#a9bbcc"/><text x="907" y="57.0" font-size="11" fill="#f4f4f4" stroke="#f4f4f4" stroke-width="0.3">107.00</text><rect x="897" y="87.0" width="6" height="1" fill="#a9bbcc"/><text x="907" y="94.0" font-size="11" fill="#f4f4f4" stroke="#f4f4f4" stroke-width="0.3">106.50</text><rect x="897" y="124.0" width="6" height="1" fill="#a9bbcc"/><text x="907" y="131.0" font-size="11" fill="#f4f4f4" stroke="#f4f4f4" stroke-width="0.3">106.00</text><rect x="897" y="160.0" width="6" height="1" fill="#a9bbcc"/><text x="907" y="167.0" font-size="11" fill="#f4f4f4" stroke="#f4f4f4" stroke-width="0.3">105.50</text><rect x="897" y="197.0" width="6" height="1" fill="#a9bbcc"/><text x="907" y="204.0" font-size="11" fill="#f4f4f4" stroke="#f4f4f4" stroke-width="0.3">105.00</text><rect x="897" y="234.0" width="6" height="1" fill="#a9bbcc"/><text x="907" y="241.0" font-size="11" fill="#f4f4f4" stroke="#f4f4f4" stroke-width="0.3">104.50</text><rect x="897" y="292" width="6" height="1" fill="#a9bbcc"/><text x="908" y="299" font-size="11" fill="#f4f4f4" stroke="#f4f4f4" stroke-width="0.3">+0.0</text><rect x="897" y="368" width="6" height="1" fill="#a9bbcc"/><text x="907" y="375" font-size="11" fill="#f4f4f4" stroke="#f4f4f4" stroke-width="0.3">50</text>
<rect x="899" y="142" width="48" height="21" fill="#fcfcfc"/>
<text x="908" y="156.2" font-size="11" fill="#3b3b5c">105.61</text>
<g><rect x="30" y="404" width="1" height="4" fill="#a9bbcc"/><text x="29.5" y="427" font-size="11" fill="#f0f0f0" stroke="#f0f0f0" stroke-width="0.3" text-anchor="middle">18</text><rect x="55" y="404" width="1" height="4" fill="#a9bbcc"/><text x="54.5" y="427" font-size="11" fill="#f0f0f0" stroke="#f0f0f0" stroke-width="0.3" text-anchor="middle">19</text><rect x="80" y="404" width="1" height="4" fill="#a9bbcc"/><text x="79.5" y="427" font-size="11" fill="#f0f0f0" stroke="#f0f0f0" stroke-width="0.3" text-anchor="middle">20</text><rect x="104" y="404" width="1" height="4" fill="#a9bbcc"/><text x="103.5" y="427" font-size="11" fill="#f0f0f0" stroke="#f0f0f0" stroke-width="0.3" text-anchor="middle">21</text><rect x="129" y="404" width="1" height="4" fill="#a9bbcc"/><text x="128.5" y="427" font-size="11" fill="#f0f0f0" stroke="#f0f0f0" stroke-width="0.3" text-anchor="middle">24</text><rect x="153" y="404" width="1" height="4" fill="#a9bbcc"/><text x="152.5" y="427" font-size="11" fill="#f0f0f0" stroke="#f0f0f0" stroke-width="0.3" text-anchor="middle">25</text><rect x="178" y="404" width="1" height="4" fill="#a9bbcc"/><text x="177.5" y="427" font-size="11" fill="#f0f0f0" stroke="#f0f0f0" stroke-width="0.3" text-anchor="middle">26</text><rect x="203" y="404" width="1" height="4" fill="#a9bbcc"/><text x="202.5" y="427" font-size="11" fill="#f0f0f0" stroke="#f0f0f0" stroke-width="0.3" text-anchor="middle">27</text><rect x="227" y="404" width="1" height="4" fill="#a9bbcc"/><text x="226.5" y="427" font-size="11" fill="#f0f0f0" stroke="#f0f0f0" stroke-width="0.3" text-anchor="middle">28</text><rect x="252" y="404" width="1" height="4" fill="#a9bbcc"/><text x="251.5" y="427" font-size="11" fill="#f0f0f0" stroke="#f0f0f0" stroke-width="0.3" text-anchor="middle">31</text><rect x="276" y="404" width="1" height="4" fill="#a9bbcc"/><text x="275.5" y="427" font-size="11" fill="#f0f0f0" stroke="#f0f0f0" stroke-width="0.3" text-anchor="middle">1</text><rect x="301" y="404" width="1" height="4" fill="#a9bbcc"/><text x="300.5" y="427" font-size="11" fill="#f0f0f0" stroke="#f0f0f0" stroke-width="0.3" text-anchor="middle">2</text><rect x="326" y="404" width="1" height="4" fill="#a9bbcc"/><text x="325.5" y="427" font-size="11" fill="#f0f0f0" stroke="#f0f0f0" stroke-width="0.3" text-anchor="middle">3</text><rect x="350" y="404" width="1" height="4" fill="#a9bbcc"/><text x="349.5" y="427" font-size="11" fill="#f0f0f0" stroke="#f0f0f0" stroke-width="0.3" text-anchor="middle">4</text><rect x="375" y="404" width="1" height="4" fill="#a9bbcc"/><text x="374.5" y="427" font-size="11" fill="#f0f0f0" stroke="#f0f0f0" stroke-width="0.3" text-anchor="middle">7</text><rect x="399" y="404" width="1" height="4" fill="#a9bbcc"/><text x="398.5" y="427" font-size="11" fill="#f0f0f0" stroke="#f0f0f0" stroke-width="0.3" text-anchor="middle">8</text><rect x="424" y="404" width="1" height="4" fill="#a9bbcc"/><text x="423.5" y="427" font-size="11" fill="#f0f0f0" stroke="#f0f0f0" stroke-width="0.3" text-anchor="middle">9</text><rect x="449" y="404" width="1" height="4" fill="#a9bbcc"/><text x="448.5" y="427" font-size="11" fill="#f0f0f0" stroke="#f0f0f0" stroke-width="0.3" text-anchor="middle">10</text><rect x="473" y="404" width="1" height="4" fill="#a9bbcc"/><text x="472.5" y="427" font-size="11" fill="#f0f0f0" stroke="#f0f0f0" stroke-width="0.3" text-anchor="middle">11</text><rect x="498" y="404" width="1" height="4" fill="#a9bbcc"/><text x="497.5" y="427" font-size="11" fill="#f0f0f0" stroke="#f0f0f0" stroke-width="0.3" text-anchor="middle">14</text><rect x="522" y="404" width="1" height="4" fill="#a9bbcc"/><text x="521.5" y="427" font-size="11" fill="#f0f0f0" stroke="#f0f0f0" stroke-width="0.3" text-anchor="middle">15</text><rect x="547" y="404" width="1" height="4" fill="#a9bbcc"/><text x="546.5" y="427" font-size="11" fill="#f0f0f0" stroke="#f0f0f0" stroke-width="0.3" text-anchor="middle">16</text><rect x="572" y="404" width="1" height="4" fill="#a9bbcc"/><text x="571.5" y="427" font-size="11" fill="#f0f0f0" stroke="#f0f0f0" stroke-width="0.3" text-anchor="middle">17</text><rect x="596" y="404" width="1" height="4" fill="#a9bbcc"/><text x="595.5" y="427" font-size="11" fill="#f0f0f0" stroke="#f0f0f0" stroke-width="0.3" text-anchor="middle">18</text><rect x="621" y="404" width="1" height="4" fill="#a9bbcc"/><text x="620.5" y="427" font-size="11" fill="#f0f0f0" stroke="#f0f0f0" stroke-width="0.3" text-anchor="middle">21</text><rect x="646" y="404" width="1" height="4" fill="#a9bbcc"/><text x="645.5" y="427" font-size="11" fill="#f0f0f0" stroke="#f0f0f0" stroke-width="0.3" text-anchor="middle">22</text><rect x="670" y="404" width="1" height="4" fill="#a9bbcc"/><text x="669.5" y="427" font-size="11" fill="#f0f0f0" stroke="#f0f0f0" stroke-width="0.3" text-anchor="middle">23</text><rect x="695" y="404" width="1" height="4" fill="#a9bbcc"/><text x="694.5" y="427" font-size="11" fill="#f0f0f0" stroke="#f0f0f0" stroke-width="0.3" text-anchor="middle">24</text><rect x="719" y="404" width="1" height="4" fill="#a9bbcc"/><text x="718.5" y="427" font-size="11" fill="#f0f0f0" stroke="#f0f0f0" stroke-width="0.3" text-anchor="middle">25</text><rect x="744" y="404" width="1" height="4" fill="#a9bbcc"/><text x="743.5" y="427" font-size="11" fill="#f0f0f0" stroke="#f0f0f0" stroke-width="0.3" text-anchor="middle">28</text><rect x="769" y="404" width="1" height="4" fill="#a9bbcc"/><text x="768.5" y="427" font-size="11" fill="#f0f0f0" stroke="#f0f0f0" stroke-width="0.3" text-anchor="middle">29</text><rect x="793" y="404" width="1" height="4" fill="#a9bbcc"/><text x="792.5" y="427" font-size="11" fill="#f0f0f0" stroke="#f0f0f0" stroke-width="0.3" text-anchor="middle">30</text><rect x="818" y="404" width="1" height="4" fill="#a9bbcc"/><text x="817.5" y="427" font-size="11" fill="#f0f0f0" stroke="#f0f0f0" stroke-width="0.3" text-anchor="middle">1</text><rect x="842" y="404" width="1" height="4" fill="#a9bbcc"/><text x="841.5" y="427" font-size="11" fill="#f0f0f0" stroke="#f0f0f0" stroke-width="0.3" text-anchor="middle">2</text><rect x="867" y="404" width="1" height="4" fill="#a9bbcc"/><text x="866.5" y="427" font-size="11" fill="#f0f0f0" stroke="#f0f0f0" stroke-width="0.3" text-anchor="middle">3</text><rect x="892" y="404" width="1" height="4" fill="#a9bbcc"/><text x="891.5" y="427" font-size="11" fill="#f0f0f0" stroke="#f0f0f0" stroke-width="0.3" text-anchor="middle">4</text></g>
<path d="M16.5 381.5 H73.5 L75.5 383.5 V398.5 L73.5 400.5 H16.5 Z" fill="#5c6c81" stroke="#c8d8e2" stroke-width="1"/>
<rect x="15" y="381" width="2" height="27" fill="#d5ecec"/>
<text x="24" y="395.2" font-size="11" fill="#f4f4f4" textLength="44.3" lengthAdjust="spacing">Авг 2020</text>
<path d="M277.5 381.5 H334.5 L336.5 383.5 V398.5 L334.5 400.5 H277.5 Z" fill="#5c6c81" stroke="#c8d8e2" stroke-width="1"/>
<rect x="276" y="381" width="2" height="27" fill="#d5ecec"/>
<text x="284" y="395.2" font-size="11" fill="#f4f4f4" textLength="46.2" lengthAdjust="spacing">Сен 2020</text>
<path d="M819.5 381.5 H876.5 L878.5 383.5 V398.5 L876.5 400.5 H819.5 Z" fill="#5c6c81" stroke="#c8d8e2" stroke-width="1"/>
<rect x="818" y="381" width="2" height="27" fill="#d5ecec"/>
<text x="826" y="395.2" font-size="11" fill="#f4f4f4" textLength="46.6" lengthAdjust="spacing">Окт 2020</text>
<rect x="46" y="41" width="105" height="13" fill="#3a4149"/><rect x="155" y="41" width="135" height="13" fill="#3a4149"/>
<text x="46" y="52" font-size="11" fill="#1a12d8" stroke="#1a12d8" stroke-width="0.25" textLength="104.6" lengthAdjust="spacingAndGlyphs">ential_Moving_Average</text>
<text x="155.6" y="52" font-size="11" fill="#e41a1a" stroke="#e41a1a" stroke-width="0.25" textLength="133.8" lengthAdjust="spacingAndGlyphs">Exponential_Moving_Average</text>
<rect x="15" y="40" width="31" height="22" fill="#f0f0f0"/>
<rect x="15" y="40" width="31" height="5" fill="#d4d4d4"/>
<rect x="19.5" y="48" width="9" height="9.5" rx="1.8" fill="#e02a30" stroke="#a01820" stroke-width="1"/>
<rect x="32.5" y="48" width="9" height="9.5" rx="1.8" fill="#1e9ad8" stroke="#1a6aa8" stroke-width="1"/>
</svg></body></html>
